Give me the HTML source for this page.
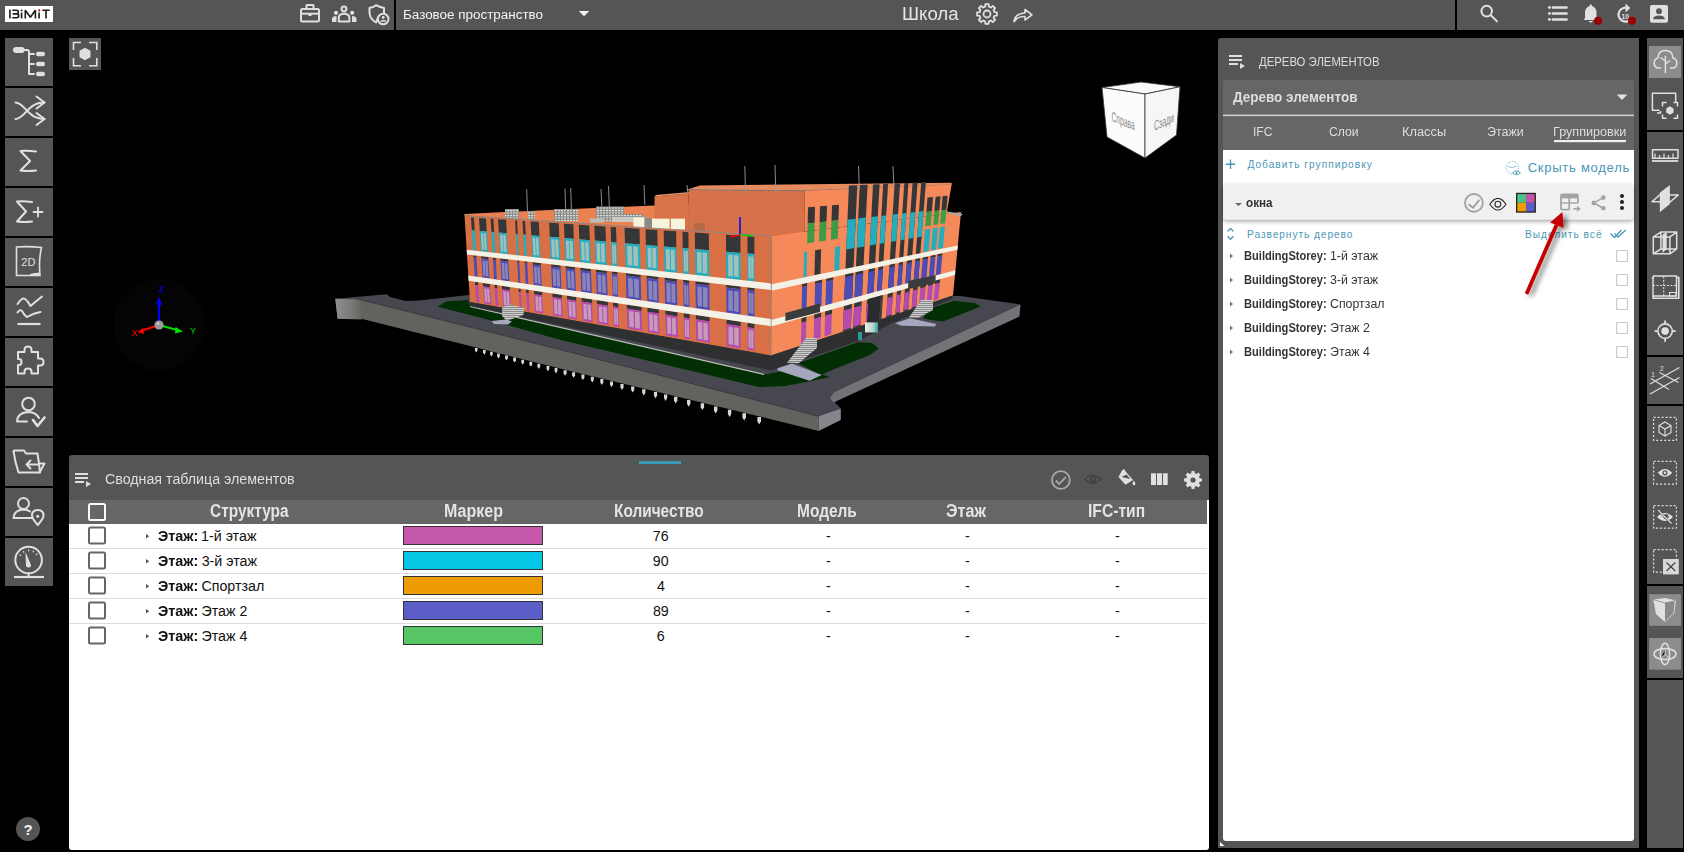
<!DOCTYPE html>
<html><head><meta charset="utf-8">
<style>
*{box-sizing:border-box;margin:0;padding:0}
html,body{width:1684px;height:852px;overflow:hidden;background:#000;font-family:"Liberation Sans",sans-serif}
.a{position:absolute}
.t{position:absolute;white-space:nowrap;transform-origin:0 0}
svg{position:absolute;left:0;top:0}
</style></head><body>
<div class="a" style="left:0;top:0;width:1684px;height:30px;background:#555"></div>
<div class="a" style="left:394px;top:0;width:2px;height:30px;background:#000"></div>
<div class="a" style="left:1455px;top:0;width:2px;height:30px;background:#000"></div>
<div class="a" style="left:69px;top:455px;width:1140px;height:395px;background:#555;border-radius:3px 3px 3px 3px"></div>
<div class="a" style="left:69px;top:500px;width:1138px;height:23.5px;background:#666"></div>
<div class="a" style="left:69px;top:523.5px;width:1140px;height:326.5px;background:#fff;border-radius:0 0 3px 3px"></div>
<div class="a" style="left:1207px;top:500px;width:2px;height:23.5px;background:#fff"></div>
<div class="a" style="left:1218px;top:38px;width:421px;height:810px;background:#555;border-radius:3px 0 0 0"></div>
<div class="a" style="left:1223px;top:80px;width:411px;height:70px;background:#666;border-radius:3px 3px 0 0"></div>
<div class="a" style="left:1223px;top:150px;width:411px;height:691px;background:#fff;border-radius:0 0 3px 3px"></div>
<svg width="1684" height="852" viewBox="0 0 1684 852">
<path d="M335.3 298.7 L387.0 294.2 L390.0 297.0 L405.7 301.0 L419.0 300.5 L468.9 295.1 L960.0 296.0 L1020.5 304.4 L834.2 391.9 L830.0 397.6 L840.8 408.4 L818.7 416.3 L560.0 349.6 L355.0 298.3 Z" fill="#47474f" />
<path d="M355.0 298.3 L560.0 349.6 L818.7 416.3 L818.7 430.9 L780.0 421.4 L560.0 368.5 L359.4 318.3 L337.6 318.7 L335.3 298.7 Z" fill="#62625e" />
<defs><linearGradient id="lg1" x1="0" x2="1"><stop offset="0" stop-color="#8e8e8c"/><stop offset="0.6" stop-color="#7a7a78"/><stop offset="1" stop-color="#62625e"/></linearGradient></defs>
<path d="M335.3 298.7 L362.0 300.0 L362.0 319.5 L337.6 318.7 Z" fill="url(#lg1)" />
<path d="M818.7 416.3 L840.8 408.4 L840.8 420.1 L818.7 430.9 Z" fill="#85858b" />
<path d="M830.0 397.6 L834.2 391.9 L1020.5 304.4 L1019.5 316.6 L834.2 402.3 L832.0 401.0 Z" fill="#737377" />
<path d="M355 298.3 L560 349.6 L818.7 416.3" stroke="#3a3a3e" stroke-width="0.8" fill="none"/>
<path d="M474.9 348.0 H477.5 V350.5 L476.2 352.5 L474.9 350.5 Z" fill="#d6d6d6"/>
<path d="M483.0 350.1 H485.6 V352.6 L484.3 354.7 L483.0 352.6 Z" fill="#d6d6d6"/>
<path d="M490.1 351.8 H492.7 V354.4 L491.4 356.5 L490.1 354.4 Z" fill="#d6d6d6"/>
<path d="M497.2 353.6 H499.8 V356.3 L498.5 358.4 L497.2 356.3 Z" fill="#d6d6d6"/>
<path d="M505.1 355.6 H507.9 V358.3 L506.5 360.4 L505.1 358.3 Z" fill="#d6d6d6"/>
<path d="M513.2 357.6 H516.0 V360.4 L514.6 362.6 L513.2 360.4 Z" fill="#d6d6d6"/>
<path d="M521.3 359.7 H524.1 V362.5 L522.7 364.7 L521.3 362.5 Z" fill="#d6d6d6"/>
<path d="M529.4 361.7 H532.2 V364.5 L530.8 366.8 L529.4 364.5 Z" fill="#d6d6d6"/>
<path d="M537.4 363.7 H540.2 V366.6 L538.8 368.9 L537.4 366.6 Z" fill="#d6d6d6"/>
<path d="M546.5 366.0 H549.3 V368.9 L547.9 371.2 L546.5 368.9 Z" fill="#d6d6d6"/>
<path d="M554.6 368.0 H557.4 V371.0 L556.0 373.4 L554.6 371.0 Z" fill="#d6d6d6"/>
<path d="M563.6 370.2 H566.6 V373.3 L565.1 375.7 L563.6 373.3 Z" fill="#d6d6d6"/>
<path d="M572.1 372.3 H575.1 V375.4 L573.6 377.8 L572.1 375.4 Z" fill="#d6d6d6"/>
<path d="M581.4 374.5 H584.4 V377.7 L582.9 380.1 L581.4 377.7 Z" fill="#d6d6d6"/>
<path d="M590.8 376.8 H593.8 V380.0 L592.3 382.5 L590.8 380.0 Z" fill="#d6d6d6"/>
<path d="M600.3 379.1 H603.3 V382.4 L601.8 384.9 L600.3 382.4 Z" fill="#d6d6d6"/>
<path d="M610.0 381.4 H613.0 V384.7 L611.5 387.3 L610.0 384.7 Z" fill="#d6d6d6"/>
<path d="M620.4 383.9 H623.6 V387.3 L622.0 390.0 L620.4 387.3 Z" fill="#d6d6d6"/>
<path d="M631.1 386.5 H634.3 V390.0 L632.7 392.6 L631.1 390.0 Z" fill="#d6d6d6"/>
<path d="M642.2 389.2 H645.4 V392.7 L643.8 395.4 L642.2 392.7 Z" fill="#d6d6d6"/>
<path d="M653.9 392.0 H657.1 V395.6 L655.5 398.4 L653.9 395.6 Z" fill="#d6d6d6"/>
<path d="M664.0 394.4 H667.2 V398.1 L665.6 400.9 L664.0 398.1 Z" fill="#d6d6d6"/>
<path d="M674.0 396.8 H677.4 V400.6 L675.7 403.4 L674.0 400.6 Z" fill="#d6d6d6"/>
<path d="M687.0 400.0 H690.4 V403.8 L688.7 406.7 L687.0 403.8 Z" fill="#d6d6d6"/>
<path d="M700.7 403.2 H704.1 V407.2 L702.4 410.1 L700.7 407.2 Z" fill="#d6d6d6"/>
<path d="M714.0 406.4 H717.4 V410.5 L715.7 413.5 L714.0 410.5 Z" fill="#d6d6d6"/>
<path d="M727.9 409.8 H731.3 V413.9 L729.6 417.0 L727.9 413.9 Z" fill="#d6d6d6"/>
<path d="M742.4 413.3 H746.0 V417.5 L744.2 420.6 L742.4 417.5 Z" fill="#d6d6d6"/>
<path d="M757.4 416.9 H761.0 V421.2 L759.2 424.4 L757.4 421.2 Z" fill="#d6d6d6"/>
<path d="M437.7 306.7 L446.0 301.5 L468.0 300.0 L470.0 306.0 L764.0 374.4 L800.0 368.0 L830.0 377.0 L808.8 381.6 L785.0 386.0 L760.0 387.2 L560.0 339.8 L480.0 317.4 Z" fill="#012e02" />
<path d="M798.0 363.2 L857.9 342.3 L872.0 343.0 L878.8 348.5 L870.0 355.0 L833.2 369.4 L821.0 375.0 Z" fill="#012e02" />
<path d="M923.2 318.2 L929.0 309.0 L953.9 300.8 L975.0 303.0 L980.5 306.6 L943.1 321.5 L930.7 320.0 Z" fill="#012e02" />
<path d="M470 306.5 L764 374.4" stroke="#bdbdbd" stroke-width="1.2"/>
<path d="M776.0 364.7 L792.4 363.7 L821.8 375.1 L809.5 380.8 L778.0 370.4 Z" fill="#a6a6bc" />
<path d="M894.9 323.2 L909.9 318.2 L936.5 324.0 L934.8 326.5 L901.6 325.7 Z" fill="#a6a6bc" />
<path d="M491.6 321.0 L506.0 319.5 L512.0 321.5 L508.0 324.5 L494.0 324.0 Z" fill="#a6a6bc" />
<path d="M464.5 215.6 L464.5 214.0 L560.0 209.5 L654.5 205.4 L688.7 204.5 L688.7 231.5 Z" fill="#e98150" />
<path d="M654.5 196.5 L688.7 193.5 L688.7 232.0 L654.5 229.0 Z" fill="#d9744a" />
<path d="M654.5 196.5 L688.7 193.5 L690.0 192.0 L656.0 195.0 Z" fill="#f09a70" />
<path d="M688.7 189.6 L804.4 190.8 L804.4 234.5 L771.5 236.0 L688.7 231.5 Z" fill="#d7714a" />
<path d="M686.5 189.7 L700.0 185.5 L951.7 182.8 L951.7 184.8 L804.4 190.8 Z" fill="#e68a60" />
<path d="M686.5 189.7 L804.4 190.8 L951.7 184.8" stroke="#777" stroke-width="0.8" fill="none"/>
<defs><pattern id="eqp" width="3" height="2.5" patternUnits="userSpaceOnUse"><rect width="3" height="2.5" fill="#8e8e8c"/><rect width="2" height="1" fill="#e6e6e2"/></pattern></defs>
<rect x="505" y="209" width="14" height="11" fill="url(#eqp)"/>
<rect x="528" y="211" width="7" height="9" fill="url(#eqp)"/>
<rect x="554" y="209" width="24" height="12" fill="url(#eqp)"/>
<rect x="596" y="206.5" width="28" height="15" fill="url(#eqp)"/>
<rect x="622" y="214" width="20" height="8" fill="url(#eqp)"/>
<rect x="640" y="216" width="6" height="8" fill="url(#eqp)"/>
<rect x="612" y="217" width="30" height="5" fill="#c8c8c4"/>
<rect x="590" y="218.5" width="14" height="4" fill="#bdbdb9"/>
<rect x="633.4" y="217.4" width="11.2" height="11.9" fill="#f6f4dc"/>
<rect x="652" y="218.6" width="17.6" height="10.5" fill="#f6f4dc"/>
<rect x="670.8" y="218.6" width="14.2" height="11" fill="#f6f4dc"/>
<rect x="644.6" y="218" width="7.4" height="11" fill="#8a8a88"/>
<rect x="694" y="223" width="11" height="9" fill="#b56a4a"/>
<path d="M464.5 215.6 L771.5 236.0 L771.0 355.5 L470.0 302.0 Z" fill="#d96f45" />
<path d="M471.0 217.4 L474.0 217.6 L474.8 230.4 L471.8 230.2 Z" fill="#353638" />
<path d="M471.8 230.2 L474.8 230.4 L476.0 250.7 L473.0 250.4 Z" fill="#22aebf" />
<path d="M473.3 255.2 L476.3 255.6 L476.5 257.7 L473.5 257.4 Z" fill="#353638" />
<path d="M473.5 257.4 L476.5 257.7 L477.6 276.9 L474.7 276.5 Z" fill="#4b4cb6" />
<path d="M475.0 281.7 L478.0 282.1 L478.2 285.6 L475.2 285.1 Z" fill="#353638" />
<path d="M475.2 285.1 L478.2 285.6 L479.2 302.4 L476.2 301.8 Z" fill="#b44cb0" />
<path d="M479.0 217.9 L486.0 218.4 L486.8 231.5 L479.8 230.9 Z" fill="#353638" />
<path d="M479.8 230.9 L486.8 231.5 L488.0 252.1 L481.0 251.3 Z" fill="#22aebf" />
<path d="M480.9 233.0 L483.1 233.2 L484.1 249.6 L481.9 249.4 Z" fill="#b4c4bc" opacity="0.85"/>
<path d="M483.7 233.2 L485.9 233.4 L486.9 249.9 L484.7 249.7 Z" fill="#b4c4bc" opacity="0.85"/>
<path d="M481.3 256.1 L488.3 256.9 L488.4 259.2 L481.4 258.3 Z" fill="#353638" />
<path d="M481.4 258.3 L488.4 259.2 L489.6 278.6 L482.6 277.6 Z" fill="#4b4cb6" />
<path d="M482.5 260.4 L484.8 260.7 L485.7 276.2 L483.5 275.8 Z" fill="#9890b8" opacity="0.85"/>
<path d="M485.3 260.7 L487.6 261.0 L488.5 276.6 L486.2 276.2 Z" fill="#9890b8" opacity="0.85"/>
<path d="M482.9 282.9 L489.9 283.9 L490.1 287.4 L483.1 286.3 Z" fill="#353638" />
<path d="M483.1 286.3 L490.1 287.4 L491.1 304.5 L484.2 303.2 Z" fill="#b44cb0" />
<path d="M484.2 288.2 L486.4 288.5 L487.2 302.1 L485.0 301.7 Z" fill="#c8a8bc" opacity="0.85"/>
<path d="M487.0 288.6 L489.2 289.0 L490.0 302.6 L487.8 302.2 Z" fill="#c8a8bc" opacity="0.85"/>
<path d="M490.6 218.7 L493.4 218.9 L494.2 232.1 L491.4 231.8 Z" fill="#353638" />
<path d="M491.4 231.8 L494.2 232.1 L495.4 252.9 L492.6 252.6 Z" fill="#22aebf" />
<path d="M492.9 257.5 L495.7 257.8 L495.8 260.1 L493.0 259.7 Z" fill="#353638" />
<path d="M493.0 259.7 L495.8 260.1 L496.9 279.7 L494.1 279.3 Z" fill="#4b4cb6" />
<path d="M494.4 284.6 L497.2 285.0 L497.4 288.6 L494.7 288.1 Z" fill="#353638" />
<path d="M494.7 288.1 L497.4 288.6 L498.4 305.7 L495.6 305.3 Z" fill="#b44cb0" />
<path d="M498.0 219.2 L506.1 219.7 L506.8 233.2 L498.8 232.5 Z" fill="#353638" />
<path d="M498.8 232.5 L506.8 233.2 L507.9 254.3 L500.0 253.4 Z" fill="#22aebf" />
<path d="M500.0 234.7 L502.6 234.9 L503.5 251.7 L501.0 251.4 Z" fill="#b4c4bc" opacity="0.85"/>
<path d="M503.2 235.0 L505.8 235.2 L506.7 252.0 L504.1 251.8 Z" fill="#b4c4bc" opacity="0.85"/>
<path d="M500.3 258.3 L508.2 259.3 L508.3 261.6 L500.4 260.6 Z" fill="#353638" />
<path d="M500.4 260.6 L508.3 261.6 L509.4 281.5 L501.5 280.3 Z" fill="#4b4cb6" />
<path d="M501.6 262.7 L504.1 263.0 L505.0 278.9 L502.5 278.5 Z" fill="#9890b8" opacity="0.85"/>
<path d="M504.8 263.1 L507.3 263.4 L508.2 279.3 L505.7 279.0 Z" fill="#9890b8" opacity="0.85"/>
<path d="M501.8 285.7 L509.7 286.9 L509.9 290.5 L502.0 289.3 Z" fill="#353638" />
<path d="M502.0 289.3 L509.9 290.5 L510.9 307.9 L503.0 306.5 Z" fill="#b44cb0" />
<path d="M503.2 291.2 L505.7 291.6 L506.5 305.5 L504.0 305.0 Z" fill="#c8a8bc" opacity="0.85"/>
<path d="M506.4 291.7 L508.9 292.1 L509.7 306.0 L507.1 305.6 Z" fill="#c8a8bc" opacity="0.85"/>
<path d="M515.1 220.4 L517.1 220.5 L517.8 234.1 L515.8 233.9 Z" fill="#353638" />
<path d="M515.8 233.9 L517.8 234.1 L518.9 255.5 L516.9 255.2 Z" fill="#22aebf" />
<path d="M517.2 260.3 L519.2 260.6 L519.3 262.9 L517.3 262.6 Z" fill="#353638" />
<path d="M517.3 262.6 L519.3 262.9 L520.4 283.1 L518.4 282.8 Z" fill="#4b4cb6" />
<path d="M518.7 288.2 L520.6 288.5 L520.8 292.2 L518.8 291.9 Z" fill="#353638" />
<path d="M518.8 291.9 L520.8 292.2 L521.8 309.9 L519.8 309.5 Z" fill="#b44cb0" />
<path d="M522.5 220.9 L525.1 221.0 L525.8 234.8 L523.2 234.5 Z" fill="#353638" />
<path d="M523.2 234.5 L525.8 234.8 L526.9 256.4 L524.3 256.1 Z" fill="#22aebf" />
<path d="M524.6 261.2 L527.2 261.5 L527.3 263.8 L524.7 263.5 Z" fill="#353638" />
<path d="M524.7 263.5 L527.3 263.8 L528.3 284.2 L525.7 283.8 Z" fill="#4b4cb6" />
<path d="M526.0 289.3 L528.6 289.7 L528.8 293.4 L526.2 293.0 Z" fill="#353638" />
<path d="M526.2 293.0 L528.8 293.4 L529.7 311.2 L527.1 310.8 Z" fill="#b44cb0" />
<path d="M530.6 221.4 L538.8 222.0 L539.4 235.9 L531.3 235.2 Z" fill="#353638" />
<path d="M531.3 235.2 L539.4 235.9 L540.5 257.9 L532.4 257.0 Z" fill="#22aebf" />
<path d="M532.5 237.5 L535.1 237.7 L536.0 255.2 L533.4 254.9 Z" fill="#b4c4bc" opacity="0.85"/>
<path d="M535.8 237.8 L538.4 238.0 L539.2 255.5 L536.6 255.3 Z" fill="#b4c4bc" opacity="0.85"/>
<path d="M532.6 262.1 L540.7 263.1 L540.8 265.4 L532.7 264.5 Z" fill="#353638" />
<path d="M532.7 264.5 L540.8 265.4 L541.8 286.1 L533.8 285.0 Z" fill="#4b4cb6" />
<path d="M534.0 266.7 L536.5 267.0 L537.3 283.5 L534.8 283.1 Z" fill="#9890b8" opacity="0.85"/>
<path d="M537.2 267.1 L539.8 267.4 L540.6 283.9 L538.0 283.6 Z" fill="#9890b8" opacity="0.85"/>
<path d="M534.0 290.5 L542.1 291.8 L542.2 295.5 L534.2 294.3 Z" fill="#353638" />
<path d="M534.2 294.3 L542.2 295.5 L543.1 313.6 L535.1 312.2 Z" fill="#b44cb0" />
<path d="M535.4 296.2 L538.0 296.6 L538.7 311.1 L536.1 310.6 Z" fill="#c8a8bc" opacity="0.85"/>
<path d="M538.6 296.7 L541.2 297.1 L541.9 311.6 L539.3 311.2 Z" fill="#c8a8bc" opacity="0.85"/>
<path d="M549.2 222.7 L558.7 223.3 L559.3 237.6 L549.8 236.8 Z" fill="#353638" />
<path d="M549.8 236.8 L559.3 237.6 L560.3 260.0 L550.8 259.0 Z" fill="#22aebf" />
<path d="M551.2 239.1 L554.3 239.4 L555.1 257.3 L552.0 256.9 Z" fill="#b4c4bc" opacity="0.85"/>
<path d="M555.0 239.5 L558.1 239.7 L558.9 257.7 L555.8 257.3 Z" fill="#b4c4bc" opacity="0.85"/>
<path d="M551.1 264.3 L560.5 265.4 L560.6 267.8 L551.2 266.7 Z" fill="#353638" />
<path d="M551.2 266.7 L560.6 267.8 L561.5 289.0 L552.1 287.6 Z" fill="#4b4cb6" />
<path d="M552.6 268.9 L555.6 269.3 L556.3 286.1 L553.3 285.7 Z" fill="#9890b8" opacity="0.85"/>
<path d="M556.3 269.4 L559.4 269.8 L560.1 286.7 L557.1 286.3 Z" fill="#9890b8" opacity="0.85"/>
<path d="M552.4 293.3 L561.8 294.7 L561.9 298.5 L552.5 297.1 Z" fill="#353638" />
<path d="M552.5 297.1 L561.9 298.5 L562.7 317.1 L553.4 315.4 Z" fill="#b44cb0" />
<path d="M553.9 299.1 L556.9 299.6 L557.6 314.3 L554.6 313.8 Z" fill="#c8a8bc" opacity="0.85"/>
<path d="M557.7 299.7 L560.7 300.2 L561.3 315.0 L558.3 314.5 Z" fill="#c8a8bc" opacity="0.85"/>
<path d="M563.9 223.7 L573.3 224.3 L573.8 238.8 L564.5 238.0 Z" fill="#353638" />
<path d="M564.5 238.0 L573.8 238.8 L574.7 261.6 L565.5 260.6 Z" fill="#22aebf" />
<path d="M565.9 240.4 L568.9 240.7 L569.6 258.8 L566.7 258.5 Z" fill="#b4c4bc" opacity="0.85"/>
<path d="M569.6 240.7 L572.6 241.0 L573.3 259.2 L570.4 258.9 Z" fill="#b4c4bc" opacity="0.85"/>
<path d="M565.7 266.0 L575.0 267.1 L575.1 269.5 L565.8 268.4 Z" fill="#353638" />
<path d="M565.8 268.4 L575.1 269.5 L575.9 291.1 L566.7 289.7 Z" fill="#4b4cb6" />
<path d="M567.2 270.7 L570.1 271.1 L570.8 288.2 L567.9 287.8 Z" fill="#9890b8" opacity="0.85"/>
<path d="M570.9 271.2 L573.8 271.5 L574.5 288.7 L571.6 288.3 Z" fill="#9890b8" opacity="0.85"/>
<path d="M566.9 295.5 L576.1 296.9 L576.3 300.8 L567.1 299.3 Z" fill="#353638" />
<path d="M567.1 299.3 L576.3 300.8 L577.0 319.6 L567.9 318.0 Z" fill="#b44cb0" />
<path d="M568.5 301.4 L571.4 301.9 L572.0 316.9 L569.1 316.3 Z" fill="#c8a8bc" opacity="0.85"/>
<path d="M572.1 302.0 L575.1 302.5 L575.7 317.5 L572.7 317.0 Z" fill="#c8a8bc" opacity="0.85"/>
<path d="M578.8 224.7 L589.3 225.4 L589.9 240.2 L579.3 239.3 Z" fill="#353638" />
<path d="M579.3 239.3 L589.9 240.2 L590.7 263.4 L580.2 262.2 Z" fill="#22aebf" />
<path d="M580.9 241.7 L584.2 242.0 L584.9 260.5 L581.6 260.1 Z" fill="#b4c4bc" opacity="0.85"/>
<path d="M585.1 242.1 L588.5 242.4 L589.1 260.9 L585.8 260.6 Z" fill="#b4c4bc" opacity="0.85"/>
<path d="M580.4 267.7 L590.9 268.9 L591.0 271.4 L580.5 270.2 Z" fill="#353638" />
<path d="M580.5 270.2 L591.0 271.4 L591.8 293.3 L581.4 291.8 Z" fill="#4b4cb6" />
<path d="M582.1 272.5 L585.4 272.9 L586.0 290.4 L582.7 289.9 Z" fill="#9890b8" opacity="0.85"/>
<path d="M586.2 273.0 L589.6 273.4 L590.2 290.9 L586.9 290.5 Z" fill="#9890b8" opacity="0.85"/>
<path d="M581.6 297.7 L592.0 299.3 L592.1 303.2 L581.7 301.6 Z" fill="#353638" />
<path d="M581.7 301.6 L592.1 303.2 L592.8 322.4 L582.5 320.6 Z" fill="#b44cb0" />
<path d="M583.3 303.7 L586.6 304.3 L587.1 319.5 L583.8 318.9 Z" fill="#c8a8bc" opacity="0.85"/>
<path d="M587.4 304.4 L590.7 304.9 L591.3 320.2 L588.0 319.6 Z" fill="#c8a8bc" opacity="0.85"/>
<path d="M594.3 225.8 L605.4 226.5 L605.9 241.5 L594.9 240.6 Z" fill="#353638" />
<path d="M594.9 240.6 L605.9 241.5 L606.6 265.2 L595.7 264.0 Z" fill="#22aebf" />
<path d="M596.5 243.1 L600.0 243.4 L600.6 262.2 L597.1 261.8 Z" fill="#b4c4bc" opacity="0.85"/>
<path d="M600.8 243.5 L604.4 243.8 L605.0 262.6 L601.5 262.3 Z" fill="#b4c4bc" opacity="0.85"/>
<path d="M595.9 269.5 L606.8 270.8 L606.9 273.3 L596.0 272.0 Z" fill="#353638" />
<path d="M596.0 272.0 L606.9 273.3 L607.6 295.6 L596.7 294.0 Z" fill="#4b4cb6" />
<path d="M597.6 274.4 L601.0 274.8 L601.6 292.6 L598.2 292.1 Z" fill="#9890b8" opacity="0.85"/>
<path d="M601.9 274.9 L605.4 275.4 L606.0 293.2 L602.5 292.7 Z" fill="#9890b8" opacity="0.85"/>
<path d="M596.9 300.0 L607.8 301.7 L608.0 305.7 L597.1 304.0 Z" fill="#353638" />
<path d="M597.1 304.0 L608.0 305.7 L608.6 325.2 L597.8 323.2 Z" fill="#b44cb0" />
<path d="M598.7 306.2 L602.1 306.7 L602.6 322.2 L599.2 321.6 Z" fill="#c8a8bc" opacity="0.85"/>
<path d="M603.0 306.8 L606.5 307.4 L607.0 322.9 L603.5 322.3 Z" fill="#c8a8bc" opacity="0.85"/>
<path d="M610.6 226.9 L616.0 227.2 L616.5 242.4 L611.1 242.0 Z" fill="#353638" />
<path d="M611.1 242.0 L616.5 242.4 L617.2 266.3 L611.8 265.7 Z" fill="#22aebf" />
<path d="M611.9 244.4 L613.6 244.6 L614.2 263.6 L612.5 263.5 Z" fill="#b4c4bc" opacity="0.85"/>
<path d="M614.1 244.6 L615.8 244.8 L616.4 263.9 L614.6 263.7 Z" fill="#b4c4bc" opacity="0.85"/>
<path d="M612.0 271.4 L617.4 272.0 L617.4 274.6 L612.1 273.9 Z" fill="#353638" />
<path d="M612.1 273.9 L617.4 274.6 L618.1 297.1 L612.8 296.4 Z" fill="#4b4cb6" />
<path d="M612.9 276.3 L614.6 276.5 L615.2 294.5 L613.5 294.2 Z" fill="#9890b8" opacity="0.85"/>
<path d="M615.0 276.5 L616.8 276.8 L617.3 294.8 L615.6 294.5 Z" fill="#9890b8" opacity="0.85"/>
<path d="M613.0 302.4 L618.3 303.2 L618.4 307.3 L613.1 306.5 Z" fill="#353638" />
<path d="M613.1 306.5 L618.4 307.3 L619.0 327.0 L613.7 326.1 Z" fill="#b44cb0" />
<path d="M613.9 308.5 L615.6 308.8 L616.1 324.5 L614.4 324.2 Z" fill="#c8a8bc" opacity="0.85"/>
<path d="M616.0 308.9 L617.7 309.2 L618.2 324.9 L616.5 324.6 Z" fill="#c8a8bc" opacity="0.85"/>
<path d="M624.5 227.8 L639.5 228.8 L639.9 244.4 L625.0 243.2 Z" fill="#353638" />
<path d="M625.0 243.2 L639.9 244.4 L640.5 268.9 L625.7 267.3 Z" fill="#22aebf" />
<path d="M627.1 245.8 L631.8 246.2 L632.4 265.6 L627.6 265.1 Z" fill="#b4c4bc" opacity="0.85"/>
<path d="M633.0 246.3 L637.8 246.7 L638.3 266.2 L633.6 265.7 Z" fill="#b4c4bc" opacity="0.85"/>
<path d="M625.8 273.0 L640.7 274.7 L640.7 277.4 L625.9 275.6 Z" fill="#353638" />
<path d="M625.9 275.6 L640.7 277.4 L641.3 300.5 L626.5 298.3 Z" fill="#4b4cb6" />
<path d="M628.0 278.1 L632.7 278.7 L633.2 297.0 L628.5 296.4 Z" fill="#9890b8" opacity="0.85"/>
<path d="M633.9 278.8 L638.7 279.4 L639.1 297.9 L634.4 297.2 Z" fill="#9890b8" opacity="0.85"/>
<path d="M626.7 304.5 L641.5 306.7 L641.6 310.9 L626.8 308.6 Z" fill="#353638" />
<path d="M626.8 308.6 L641.6 310.9 L642.1 331.0 L627.4 328.5 Z" fill="#b44cb0" />
<path d="M628.9 310.9 L633.6 311.6 L634.0 327.6 L629.4 326.8 Z" fill="#c8a8bc" opacity="0.85"/>
<path d="M634.8 311.8 L639.5 312.6 L639.9 328.7 L635.2 327.9 Z" fill="#c8a8bc" opacity="0.85"/>
<path d="M645.5 229.3 L657.3 230.1 L657.6 245.9 L645.9 244.9 Z" fill="#353638" />
<path d="M645.9 244.9 L657.6 245.9 L658.1 270.9 L646.5 269.6 Z" fill="#22aebf" />
<path d="M647.6 247.5 L651.3 247.9 L651.8 267.7 L648.0 267.3 Z" fill="#b4c4bc" opacity="0.85"/>
<path d="M652.2 248.0 L656.0 248.3 L656.4 268.2 L652.7 267.8 Z" fill="#b4c4bc" opacity="0.85"/>
<path d="M646.6 275.4 L658.3 276.8 L658.3 279.5 L646.7 278.1 Z" fill="#353638" />
<path d="M646.7 278.1 L658.3 279.5 L658.8 303.0 L647.2 301.3 Z" fill="#4b4cb6" />
<path d="M648.4 280.6 L652.1 281.1 L652.5 299.7 L648.8 299.2 Z" fill="#9890b8" opacity="0.85"/>
<path d="M653.0 281.2 L656.7 281.6 L657.1 300.4 L653.4 299.9 Z" fill="#9890b8" opacity="0.85"/>
<path d="M647.4 307.6 L658.9 309.3 L659.0 313.6 L647.5 311.8 Z" fill="#353638" />
<path d="M647.5 311.8 L659.0 313.6 L659.5 334.1 L648.0 332.1 Z" fill="#b44cb0" />
<path d="M649.1 314.1 L652.8 314.7 L653.2 331.0 L649.5 330.3 Z" fill="#c8a8bc" opacity="0.85"/>
<path d="M653.7 314.8 L657.4 315.4 L657.8 331.8 L654.1 331.1 Z" fill="#c8a8bc" opacity="0.85"/>
<path d="M663.7 230.5 L676.1 231.3 L676.3 247.5 L664.0 246.5 Z" fill="#353638" />
<path d="M664.0 246.5 L676.3 247.5 L676.8 272.9 L664.5 271.6 Z" fill="#22aebf" />
<path d="M665.8 249.1 L669.7 249.5 L670.1 269.7 L666.2 269.3 Z" fill="#b4c4bc" opacity="0.85"/>
<path d="M670.7 249.6 L674.6 249.9 L675.0 270.2 L671.0 269.8 Z" fill="#b4c4bc" opacity="0.85"/>
<path d="M664.6 277.5 L676.9 279.0 L676.9 281.7 L664.7 280.2 Z" fill="#353638" />
<path d="M664.7 280.2 L676.9 281.7 L677.3 305.6 L665.1 303.9 Z" fill="#4b4cb6" />
<path d="M666.4 282.8 L670.3 283.3 L670.7 302.3 L666.8 301.8 Z" fill="#9890b8" opacity="0.85"/>
<path d="M671.3 283.4 L675.2 283.9 L675.5 303.0 L671.6 302.5 Z" fill="#9890b8" opacity="0.85"/>
<path d="M665.3 310.3 L677.4 312.1 L677.5 316.4 L665.4 314.6 Z" fill="#353638" />
<path d="M665.4 314.6 L677.5 316.4 L677.9 337.3 L665.8 335.2 Z" fill="#b44cb0" />
<path d="M667.1 316.9 L670.9 317.5 L671.2 334.1 L667.4 333.5 Z" fill="#c8a8bc" opacity="0.85"/>
<path d="M671.9 317.7 L675.8 318.3 L676.1 335.0 L672.2 334.3 Z" fill="#c8a8bc" opacity="0.85"/>
<path d="M682.5 231.8 L688.4 232.2 L688.6 248.5 L682.7 248.0 Z" fill="#353638" />
<path d="M682.7 248.0 L688.6 248.5 L689.0 274.3 L683.1 273.6 Z" fill="#22aebf" />
<path d="M683.6 250.7 L685.5 250.9 L685.8 271.4 L683.9 271.2 Z" fill="#b4c4bc" opacity="0.85"/>
<path d="M685.9 250.9 L687.8 251.1 L688.1 271.6 L686.3 271.4 Z" fill="#b4c4bc" opacity="0.85"/>
<path d="M683.2 279.7 L689.1 280.4 L689.1 283.2 L683.3 282.5 Z" fill="#353638" />
<path d="M683.3 282.5 L689.1 283.2 L689.5 307.4 L683.6 306.5 Z" fill="#4b4cb6" />
<path d="M684.1 285.0 L686.0 285.2 L686.3 304.5 L684.4 304.3 Z" fill="#9890b8" opacity="0.85"/>
<path d="M686.5 285.3 L688.3 285.5 L688.6 304.9 L686.7 304.6 Z" fill="#9890b8" opacity="0.85"/>
<path d="M683.7 313.1 L689.6 314.0 L689.6 318.3 L683.8 317.4 Z" fill="#353638" />
<path d="M683.8 317.4 L689.6 318.3 L689.9 339.5 L684.1 338.5 Z" fill="#b44cb0" />
<path d="M684.7 319.7 L686.5 319.9 L686.8 336.8 L684.9 336.5 Z" fill="#c8a8bc" opacity="0.85"/>
<path d="M687.0 320.0 L688.8 320.3 L689.1 337.2 L687.2 336.9 Z" fill="#c8a8bc" opacity="0.85"/>
<path d="M694.8 232.6 L708.8 233.6 L709.0 250.3 L695.0 249.1 Z" fill="#353638" />
<path d="M695.0 249.1 L709.0 250.3 L709.2 276.5 L695.4 275.0 Z" fill="#22aebf" />
<path d="M697.0 251.9 L701.4 252.2 L701.7 273.1 L697.3 272.6 Z" fill="#b4c4bc" opacity="0.85"/>
<path d="M702.5 252.3 L707.0 252.7 L707.2 273.7 L702.8 273.2 Z" fill="#b4c4bc" opacity="0.85"/>
<path d="M695.5 281.1 L709.3 282.7 L709.3 285.6 L695.5 283.9 Z" fill="#353638" />
<path d="M695.5 283.9 L709.3 285.6 L709.5 310.3 L695.8 308.3 Z" fill="#4b4cb6" />
<path d="M697.4 286.6 L701.8 287.1 L702.0 306.8 L697.7 306.1 Z" fill="#9890b8" opacity="0.85"/>
<path d="M702.9 287.3 L707.4 287.8 L707.6 307.5 L703.1 306.9 Z" fill="#9890b8" opacity="0.85"/>
<path d="M695.9 314.9 L709.6 317.0 L709.6 321.4 L695.9 319.3 Z" fill="#353638" />
<path d="M695.9 319.3 L709.6 321.4 L709.9 343.0 L696.2 340.6 Z" fill="#b44cb0" />
<path d="M697.9 321.7 L702.2 322.4 L702.4 339.5 L698.1 338.8 Z" fill="#c8a8bc" opacity="0.85"/>
<path d="M703.3 322.6 L707.7 323.3 L707.9 340.5 L703.5 339.7 Z" fill="#c8a8bc" opacity="0.85"/>
<path d="M726.0 234.7 L740.4 235.7 L740.5 252.9 L726.1 251.7 Z" fill="#353638" />
<path d="M726.1 251.7 L740.5 252.9 L740.6 280.0 L726.2 278.4 Z" fill="#22aebf" />
<path d="M728.1 254.6 L732.7 255.0 L732.8 276.4 L728.2 275.9 Z" fill="#b4c4bc" opacity="0.85"/>
<path d="M733.8 255.1 L738.5 255.5 L738.5 277.1 L733.9 276.6 Z" fill="#b4c4bc" opacity="0.85"/>
<path d="M726.3 284.7 L740.6 286.4 L740.6 289.3 L726.3 287.6 Z" fill="#353638" />
<path d="M726.3 287.6 L740.6 289.3 L740.7 314.8 L726.4 312.7 Z" fill="#4b4cb6" />
<path d="M728.3 290.4 L732.8 290.9 L732.9 311.1 L728.4 310.5 Z" fill="#9890b8" opacity="0.85"/>
<path d="M734.0 291.1 L738.6 291.6 L738.6 311.9 L734.1 311.3 Z" fill="#9890b8" opacity="0.85"/>
<path d="M726.5 319.5 L740.7 321.6 L740.7 326.2 L726.5 324.0 Z" fill="#353638" />
<path d="M726.5 324.0 L740.7 326.2 L740.7 348.4 L726.6 345.9 Z" fill="#b44cb0" />
<path d="M728.5 326.5 L733.0 327.2 L733.1 344.9 L728.6 344.1 Z" fill="#c8a8bc" opacity="0.85"/>
<path d="M734.1 327.4 L738.7 328.1 L738.7 345.9 L734.2 345.1 Z" fill="#c8a8bc" opacity="0.85"/>
<path d="M747.5 236.2 L754.4 236.7 L754.4 254.1 L747.5 253.5 Z" fill="#353638" />
<path d="M747.5 253.5 L754.4 254.1 L754.4 281.5 L747.5 280.7 Z" fill="#22aebf" />
<path d="M748.5 256.4 L750.7 256.5 L750.7 278.4 L748.5 278.1 Z" fill="#b4c4bc" opacity="0.85"/>
<path d="M751.2 256.6 L753.4 256.8 L753.4 278.7 L751.2 278.4 Z" fill="#b4c4bc" opacity="0.85"/>
<path d="M747.5 287.2 L754.4 288.0 L754.4 290.9 L747.5 290.1 Z" fill="#353638" />
<path d="M747.5 290.1 L754.4 290.9 L754.4 316.7 L747.6 315.7 Z" fill="#4b4cb6" />
<path d="M748.5 292.8 L750.7 293.1 L750.7 313.6 L748.5 313.3 Z" fill="#9890b8" opacity="0.85"/>
<path d="M751.2 293.2 L753.4 293.4 L753.4 314.0 L751.2 313.7 Z" fill="#9890b8" opacity="0.85"/>
<path d="M747.6 322.7 L754.4 323.7 L754.4 328.3 L747.6 327.3 Z" fill="#353638" />
<path d="M747.6 327.3 L754.4 328.3 L754.4 350.8 L747.6 349.6 Z" fill="#b44cb0" />
<path d="M748.5 329.7 L750.7 330.0 L750.7 347.9 L748.5 347.6 Z" fill="#c8a8bc" opacity="0.85"/>
<path d="M751.2 330.1 L753.4 330.5 L753.4 348.4 L751.2 348.0 Z" fill="#c8a8bc" opacity="0.85"/>
<path d="M466.7 249.7 L771.3 283.4 L771.3 290.0 L467.0 254.5 Z" fill="#f4f2e6" />
<path d="M468.3 275.6 L771.2 319.1 L771.1 326.2 L468.6 280.7 Z" fill="#f4f2e6" />
<path d="M470.0 302.0 L771.0 355.5 L771.0 370.5 L470.0 306.0 Z" fill="#2e2f31" />
<path d="M464.5 215.6 L771.5 236" stroke="#8a8a8a" stroke-width="0.9"/>
<path d="M771.5 236.0 L961.0 212.0 L953.0 295.5 L771.0 355.5 Z" fill="#f58959" />
<path d="M804.4 190.8 L951.6 184.6 L947.0 211.6 L951.7 213.2 L804.4 231.8 Z" fill="#f58959" />
<path d="M947.0 211.6 L962.8 214.0 L961.0 216.0 L948.0 213.5 Z" fill="#a8a8a8" />
<path d="M848.9 185.6 L857.3 185.2 L850.8 329.2 L842.9 331.8 Z" fill="#353638" />
<path d="M847.5 219.7 L855.8 218.8 L854.5 248.1 L846.3 249.5 Z" fill="#22aebf" />
<path d="M845.1 277.3 L853.2 275.5 L852.2 298.1 L844.2 300.3 Z" fill="#4b4cb6" />
<path d="M843.7 310.6 L851.8 308.3 L850.9 327.7 L842.9 330.3 Z" fill="#b44cb0" />
<path d="M859.7 185.1 L867.6 184.7 L860.5 326.0 L853.1 328.4 Z" fill="#353638" />
<path d="M858.2 218.5 L865.9 217.6 L864.5 246.4 L856.9 247.7 Z" fill="#22aebf" />
<path d="M855.6 275.0 L863.1 273.3 L862.0 295.5 L854.6 297.5 Z" fill="#4b4cb6" />
<path d="M854.1 307.6 L861.5 305.4 L860.6 324.5 L853.2 327.0 Z" fill="#b44cb0" />
<path d="M873.0 184.5 L879.6 184.2 L871.9 322.2 L865.7 324.3 Z" fill="#353638" />
<path d="M871.3 217.0 L877.9 216.3 L876.3 244.3 L869.8 245.4 Z" fill="#22aebf" />
<path d="M868.4 272.1 L874.8 270.6 L873.6 292.4 L867.3 294.1 Z" fill="#4b4cb6" />
<path d="M866.8 303.9 L873.1 302.1 L872.0 320.8 L865.8 322.8 Z" fill="#b44cb0" />
<path d="M883.2 184.0 L888.1 183.8 L879.9 319.6 L875.3 321.1 Z" fill="#353638" />
<path d="M881.4 215.9 L886.2 215.3 L884.5 242.9 L879.8 243.7 Z" fill="#22aebf" />
<path d="M878.3 269.9 L883.0 268.8 L881.7 290.2 L877.0 291.5 Z" fill="#4b4cb6" />
<path d="M876.5 301.1 L881.1 299.8 L880.0 318.2 L875.4 319.7 Z" fill="#b44cb0" />
<path d="M894.6 183.5 L900.1 183.2 L891.4 315.8 L886.2 317.5 Z" fill="#353638" />
<path d="M892.7 214.6 L898.1 214.0 L896.3 240.9 L891.0 241.8 Z" fill="#22aebf" />
<path d="M889.4 267.4 L894.7 266.2 L893.3 287.1 L888.0 288.5 Z" fill="#4b4cb6" />
<path d="M887.4 297.9 L892.7 296.4 L891.5 314.4 L886.3 316.1 Z" fill="#b44cb0" />
<path d="M904.3 183.0 L908.5 182.8 L899.5 313.2 L895.4 314.5 Z" fill="#353638" />
<path d="M902.2 213.5 L906.4 213.0 L904.6 239.5 L900.4 240.2 Z" fill="#22aebf" />
<path d="M898.7 265.3 L902.8 264.3 L901.4 284.9 L897.3 286.0 Z" fill="#4b4cb6" />
<path d="M896.7 295.3 L900.8 294.1 L899.6 311.8 L895.5 313.1 Z" fill="#b44cb0" />
<path d="M912.6 182.6 L917.6 182.4 L908.2 310.3 L903.3 311.9 Z" fill="#353638" />
<path d="M910.4 212.6 L915.4 212.0 L913.5 238.0 L908.5 238.8 Z" fill="#22aebf" />
<path d="M906.8 263.4 L911.7 262.3 L910.2 282.5 L905.3 283.8 Z" fill="#4b4cb6" />
<path d="M904.7 293.0 L909.6 291.6 L908.3 309.0 L903.4 310.5 Z" fill="#b44cb0" />
<path d="M921.2 182.2 L925.9 182.0 L916.1 307.7 L911.6 309.2 Z" fill="#353638" />
<path d="M918.9 211.6 L923.6 211.1 L921.7 236.6 L917.0 237.4 Z" fill="#22aebf" />
<path d="M915.2 261.6 L919.8 260.5 L918.3 280.4 L913.7 281.6 Z" fill="#4b4cb6" />
<path d="M913.0 290.6 L917.6 289.2 L916.2 306.3 L911.7 307.8 Z" fill="#b44cb0" />
<path d="M808.0 207.3 L815.0 206.7 L814.6 222.8 L807.6 223.5 Z" fill="#353638" />
<path d="M807.6 223.5 L814.6 222.8 L814.1 242.3 L807.2 243.3 Z" fill="#3f9a45" />
<path d="M820.0 206.3 L827.0 205.7 L826.5 221.4 L819.6 222.2 Z" fill="#353638" />
<path d="M819.6 222.2 L826.5 221.4 L825.9 240.5 L819.0 241.6 Z" fill="#3f9a45" />
<path d="M832.0 205.3 L839.0 204.7 L838.4 220.1 L831.5 220.9 Z" fill="#353638" />
<path d="M831.5 220.9 L838.4 220.1 L837.8 238.8 L830.9 239.8 Z" fill="#3f9a45" />
<path d="M802.1 283.9 L807.1 282.8 L807.1 285.9 L802.1 287.0 Z" fill="#353638" />
<path d="M802.1 287.0 L807.1 285.9 L806.5 310.4 L801.6 311.8 Z" fill="#4b4cb6" />
<path d="M801.5 317.9 L806.4 316.5 L806.3 321.4 L801.4 322.8 Z" fill="#353638" />
<path d="M801.4 322.8 L806.3 321.4 L805.8 342.4 L800.9 344.0 Z" fill="#b44cb0" />
<path d="M815.2 281.1 L822.2 279.5 L822.1 282.5 L815.1 284.1 Z" fill="#353638" />
<path d="M815.1 284.1 L822.1 282.5 L821.4 306.4 L814.5 308.3 Z" fill="#4b4cb6" />
<path d="M814.3 314.3 L821.2 312.3 L821.1 317.1 L814.2 319.1 Z" fill="#353638" />
<path d="M814.2 319.1 L821.1 317.1 L820.5 337.6 L813.6 339.9 Z" fill="#b44cb0" />
<path d="M826.2 278.7 L833.2 277.1 L833.1 280.0 L826.1 281.6 Z" fill="#353638" />
<path d="M826.1 281.6 L833.1 280.0 L832.3 303.5 L825.4 305.4 Z" fill="#4b4cb6" />
<path d="M825.2 311.2 L832.1 309.3 L831.9 314.0 L825.0 316.0 Z" fill="#353638" />
<path d="M825.0 316.0 L831.9 314.0 L831.2 334.1 L824.4 336.4 Z" fill="#b44cb0" />
<path d="M804.1 252.0 L807.1 251.5 L806.5 277.0 L803.6 277.6 Z" fill="#22aebf" />
<path d="M815.1 250.2 L821.1 249.3 L820.4 274.1 L814.4 275.3 Z" fill="#353638" />
<path d="M835.1 247.0 L840.1 246.2 L839.2 270.1 L834.3 271.2 Z" fill="#22aebf" />
<path d="M927.5 197.4 L933.0 196.9 L931.9 211.3 L926.4 212.0 Z" fill="#353638" />
<path d="M926.4 212.0 L931.9 211.3 L930.7 225.5 L925.2 226.3 Z" fill="#3f9a45" />
<path d="M925.0 229.6 L930.4 228.7 L928.6 251.0 L923.2 252.2 Z" fill="#22aebf" />
<path d="M922.8 257.4 L928.2 256.3 L928.0 258.7 L922.6 259.9 Z" fill="#353638" />
<path d="M922.6 259.9 L928.0 258.7 L926.4 278.2 L921.0 279.6 Z" fill="#4b4cb6" />
<path d="M920.6 284.5 L926.0 283.0 L925.7 286.9 L920.3 288.4 Z" fill="#353638" />
<path d="M920.3 288.4 L925.7 286.9 L924.3 303.7 L919.0 305.5 Z" fill="#b44cb0" />
<path d="M935.6 196.7 L940.6 196.3 L939.4 210.5 L934.4 211.1 Z" fill="#353638" />
<path d="M934.4 211.1 L939.4 210.5 L938.2 224.4 L933.2 225.1 Z" fill="#3f9a45" />
<path d="M932.9 228.3 L937.9 227.5 L936.0 249.5 L931.1 250.5 Z" fill="#22aebf" />
<path d="M930.7 255.7 L935.6 254.6 L935.4 257.0 L930.5 258.1 Z" fill="#353638" />
<path d="M930.5 258.1 L935.4 257.0 L933.8 276.2 L928.9 277.5 Z" fill="#4b4cb6" />
<path d="M928.5 282.3 L933.4 280.9 L933.0 284.8 L928.1 286.2 Z" fill="#353638" />
<path d="M928.1 286.2 L933.0 284.8 L931.6 301.3 L926.7 302.9 Z" fill="#b44cb0" />
<path d="M942.6 196.1 L947.6 195.7 L946.4 209.7 L941.4 210.2 Z" fill="#353638" />
<path d="M941.4 210.2 L946.4 209.7 L945.2 223.3 L940.2 224.1 Z" fill="#3f9a45" />
<path d="M939.9 227.2 L944.9 226.5 L943.0 248.1 L938.0 249.1 Z" fill="#22aebf" />
<path d="M937.6 254.2 L942.5 253.1 L942.3 255.4 L937.4 256.6 Z" fill="#353638" />
<path d="M937.4 256.6 L942.3 255.4 L940.6 274.3 L935.7 275.6 Z" fill="#4b4cb6" />
<path d="M935.3 280.4 L940.2 279.0 L939.9 282.8 L935.0 284.2 Z" fill="#353638" />
<path d="M935.0 284.2 L939.9 282.8 L938.4 299.1 L933.6 300.7 Z" fill="#b44cb0" />
<path d="M771.3 284.3 L957.8 245.4 L957.4 249.8 L771.3 290.7 Z" fill="#f4f2e6" />
<path d="M771.1 320.0 L955.4 270.3 L955.0 274.9 L771.1 326.4 Z" fill="#f4f2e6" />
<path d="M868.3 299.1 L880.9 295.6 L878.8 330.9 L866.4 335.3 Z" fill="#2a2b2e" />
<path d="M880.9 295.6 L883.0 295.0 L881.1 326.5 L879.0 327.2 Z" fill="#3c3d40" />
<path d="M785.4 313.0 L820.0 303.5 L820.0 312.0 L785.4 321.0 Z" fill="#3a3b3d" />
<path d="M908.2 281.0 L935.6 275.0 L935.6 283.0 L908.2 289.0 Z" fill="#3a3b3d" />
<path d="M771.0 355.5 L953.0 295.5 L952.3 298.7 L891.6 323.2 L859.0 340.4 L771.0 370.5 Z" fill="#2e2f31" />
<path d="M771.5 236 L771 355.5" stroke="#8a8a8a" stroke-width="0.8"/>
<defs><pattern id="stp" width="3" height="2" patternUnits="userSpaceOnUse"><rect width="3" height="2" fill="#8c8c8c"/><rect width="3" height="0.9" fill="#d4d4d4"/></pattern></defs>
<path d="M502.2 307.0 L510.0 304.5 L524.5 308.0 L523.3 315.0 L506.9 321.0 L502.0 316.0 Z" fill="url(#stp)" />
<path d="M787.0 362.8 L806.0 338.0 L817.0 338.0 L817.0 348.0 L799.0 363.0 Z" fill="url(#stp)" />
<path d="M909.0 317.4 L921.0 300.0 L933.0 300.0 L933.0 310.0 L918.0 318.0 Z" fill="url(#stp)" />
<defs><linearGradient id="gb" x1="0" x2="1"><stop offset="0" stop-color="#e8ece0"/><stop offset="0.6" stop-color="#b8d8d0"/><stop offset="1" stop-color="#3aa0a0"/></linearGradient></defs>
<rect x="865" y="322.4" width="13" height="10" fill="url(#gb)"/>
<rect x="858" y="332" width="4" height="8" fill="#2a9a9a"/>
<path d="M526.7 189.3 L527.5 212.5" stroke="#9a9a9a" stroke-width="0.9"/>
<path d="M565 188.5 L565.8 215" stroke="#9a9a9a" stroke-width="0.9"/>
<path d="M570.7 188 L571.5 212" stroke="#9a9a9a" stroke-width="0.9"/>
<path d="M601 189 L601.8 206" stroke="#9a9a9a" stroke-width="0.9"/>
<path d="M608.5 186 L609.3 207" stroke="#9a9a9a" stroke-width="0.9"/>
<path d="M644 185 L644.8 205" stroke="#9a9a9a" stroke-width="0.9"/>
<path d="M687 185 L687.8 193" stroke="#9a9a9a" stroke-width="0.9"/>
<path d="M744.8 166 L745.5999999999999 195" stroke="#9a9a9a" stroke-width="0.9"/>
<path d="M775 165 L775.8 193" stroke="#9a9a9a" stroke-width="0.9"/>
<path d="M858.5 166 L859.3 190" stroke="#9a9a9a" stroke-width="0.9"/>
<path d="M893 166 L893.8 185" stroke="#9a9a9a" stroke-width="0.9"/>
<path d="M740 217 V235" stroke="#0000ff" stroke-width="1.5"/><path d="M730 237 L740 235" stroke="#ff0000" stroke-width="1.5"/><path d="M740 235 L753 236" stroke="#00d000" stroke-width="1.5"/>
<circle cx="159" cy="325" r="46" fill="#040404"/>
<path d="M159 325 V303" stroke="#0000ff" stroke-width="2"/><path d="M156 305 L159 296.5 L162 305 Z" fill="#0000ff"/>
<path d="M159 325 L141 331" stroke="#ff0000" stroke-width="2"/><path d="M143 328 L137.5 332 L144 334 Z" fill="#ff0000"/>
<path d="M159 325 L177 330" stroke="#00e000" stroke-width="2"/><path d="M175.5 327 L183 331.5 L175 333.5 Z" fill="#00e000"/>
<circle cx="159" cy="325" r="4.6" fill="#9a9a9a"/><circle cx="158" cy="323.5" r="0.9" fill="#fff"/>
<text x="161.6" y="291.5" font-size="9" fill="#0000ff" text-anchor="middle" font-family="Liberation Sans">Z</text>
<text x="134.5" y="335.5" font-size="9" fill="#ff0000" text-anchor="middle" font-family="Liberation Sans">X</text>
<text x="193" y="334" font-size="9" fill="#00d000" text-anchor="middle" font-family="Liberation Sans">Y</text>
<path d="M1102 87.5 L1141 82 L1180 86.8 L1145 94 Z" fill="#fafafa" stroke="#333" stroke-width="0.8"/>
<path d="M1102 87.5 L1145 94 L1145 158 L1107 137 Z" fill="#fcfcfc" stroke="#333" stroke-width="0.8"/>
<path d="M1145 94 L1180 86.8 L1176.5 135 L1145 158 Z" fill="#f6f6f6" stroke="#333" stroke-width="0.8"/>
<text x="0" y="0" font-size="9" fill="#8a8a8a" font-family="Liberation Sans" transform="translate(1111.5,121) matrix(0.75,0.3,0,1.55,0,0)">Справа</text>
<text x="0" y="0" font-size="9" fill="#8a8a8a" font-family="Liberation Sans" transform="translate(1154,131) matrix(0.77,-0.36,0,1.55,0,0)">Сзади</text>
<rect x="5" y="6" width="48" height="16" fill="#fff"/>
<path d="M9.9 9.5 V18.4 M12.3 10.2 H16.3 Q18.4 10.2 18.4 12 Q18.4 13.9 16.3 13.9 H12.6 M12.3 17.7 H16.5 Q18.8 17.7 18.8 15.8 Q18.8 13.9 16.5 13.9" fill="none" stroke="#1c1c1c" stroke-width="1.6" stroke-linejoin="bevel"/>
<path d="M21.6 12.6 V18.4 M25.3 18.4 V10.2 L30.4 17.2 L35.4 10.2 V18.4 M39.1 12.6 V18.4 M42.3 10.3 H49.7 M46 10.3 V18.4" fill="none" stroke="#1c1c1c" stroke-width="1.6" stroke-linejoin="bevel"/>
<circle cx="21.6" cy="10.4" r="0.95" fill="#1c1c1c"/>
<circle cx="39.1" cy="10.4" r="1.05" fill="#e00"/>
<rect x="301" y="9" width="18" height="12.5" rx="1.5" fill="none" stroke="#e0e0e0" stroke-width="2" stroke-linejoin="round" stroke-width="1.8"/>
<path d="M306.5 8.5 V5.5 Q306.5 5 307 5 H313 Q313.5 5 313.5 5.5 V8.5" fill="none" stroke="#e0e0e0" stroke-width="2" stroke-linejoin="round" stroke-width="1.8"/>
<path d="M301 13.7 H319" fill="none" stroke="#e0e0e0" stroke-width="2" stroke-linejoin="round" stroke-width="1.8"/><rect x="308.5" y="13" width="3" height="3" fill="#e0e0e0"/>
<circle cx="344" cy="9" r="2.4" fill="none" stroke="#e0e0e0" stroke-width="2" stroke-linejoin="round" stroke-width="1.6"/>
<path d="M338.8 21.5 V17.5 Q339 13.8 344 13.8 Q349 13.8 349.4 17.5 V21.5 Z" fill="none" stroke="#e0e0e0" stroke-width="2" stroke-linejoin="round" stroke-width="1.7"/>
<circle cx="336" cy="12.8" r="2.1" fill="#e0e0e0"/><circle cx="352.2" cy="12.8" r="2.1" fill="#e0e0e0"/>
<path d="M332 22 V18.5 Q332.5 16 336.5 16 V22 Z M356.5 22 V18.5 Q356 16 352 16 V22 Z" fill="#e0e0e0"/>
<path d="M378 17 Q377 21.5 376 22.5 Q370 19 369.5 13 V8 Q374 7 376 5.2 Q379 7 384 8 V14" fill="none" stroke="#e0e0e0" stroke-width="2" stroke-linejoin="round" stroke-width="1.7"/>
<circle cx="383.2" cy="19" r="5.3" fill="none" stroke="#e0e0e0" stroke-width="2" stroke-linejoin="round" stroke-width="1.7"/>
<circle cx="383.2" cy="17.5" r="1.4" fill="#e0e0e0"/><path d="M380.5 21.2 Q383.2 19.5 386 21.2 Z" fill="#e0e0e0" stroke="#e0e0e0" stroke-width="0.8"/>
<path d="M578.8 11 H589.3 L584 16.2 Z" fill="#f2f2f2"/>
<path d="M994.37 12.13 L996.87 12.39 L996.87 15.61 L994.37 15.87 L993.53 17.89 L995.12 19.84 L992.84 22.12 L990.89 20.53 L988.87 21.37 L988.61 23.87 L985.39 23.87 L985.13 21.37 L983.11 20.53 L981.16 22.12 L978.88 19.84 L980.47 17.89 L979.63 15.87 L977.13 15.61 L977.13 12.39 L979.63 12.13 L980.47 10.11 L978.88 8.16 L981.16 5.88 L983.11 7.47 L985.13 6.63 L985.39 4.13 L988.61 4.13 L988.87 6.63 L990.89 7.47 L992.84 5.88 L995.12 8.16 L993.53 10.11 Z" fill="none" stroke="#e0e0e0" stroke-width="1.8" stroke-linejoin="round"/><circle cx="987" cy="14" r="3.5" fill="none" stroke="#e0e0e0" stroke-width="1.8"/>
<path d="M1014 21.7 Q1015 13.5 1025 13 V9.5 L1032 14.8 L1025 20 V16.5 Q1018 16 1014 21.7 Z" fill="none" stroke="#e0e0e0" stroke-width="1.6" stroke-linejoin="round"/>
<circle cx="1486.7" cy="11.1" r="5.3" fill="none" stroke="#e0e0e0" stroke-width="2" stroke-linejoin="round" stroke-width="2"/>
<path d="M1490.8 15.2 L1497.5 21.9" fill="none" stroke="#e0e0e0" stroke-width="2" stroke-linejoin="round" stroke-width="2.2"/>
<circle cx="1549.4" cy="7.5" r="1.4" fill="#e0e0e0"/><path d="M1552.8 7.5 H1566.6" stroke="#e0e0e0" stroke-width="2.4" stroke-linecap="round"/>
<circle cx="1549.4" cy="13.5" r="1.4" fill="#e0e0e0"/><path d="M1552.8 13.5 H1566.6" stroke="#e0e0e0" stroke-width="2.4" stroke-linecap="round"/>
<circle cx="1549.4" cy="19.5" r="1.4" fill="#e0e0e0"/><path d="M1552.8 19.5 H1566.6" stroke="#e0e0e0" stroke-width="2.4" stroke-linecap="round"/>
<path d="M1590.8 4.2 Q1592 4.5 1592 6 Q1596.5 7.5 1596.5 13 V18 L1598 20 H1583.5 L1585 18 V13 Q1585 7.5 1589.6 6 Q1589.6 4.5 1590.8 4.2 Z" fill="#e0e0e0"/>
<path d="M1588.5 21 Q1590.8 24 1593 21 Z" fill="#e0e0e0"/>
<circle cx="1598" cy="20.8" r="4" fill="#9a0000"/>
<path d="M1628.5 8.3 A7 7 0 1 0 1631 19" fill="none" stroke="#e0e0e0" stroke-width="2.2"/>
<path d="M1625.5 3.5 L1630.3 8 L1625.5 12.5 Z" fill="#e0e0e0"/>
<text x="1625.2" y="18.6" font-size="6.5" font-weight="700" text-anchor="middle" fill="#e0e0e0" font-family="Liberation Sans">10</text>
<circle cx="1632" cy="20.8" r="4" fill="#9a0000"/>
<rect x="1650" y="5.1" width="18" height="17.7" rx="2" fill="#e0e0e0"/>
<circle cx="1659" cy="11.2" r="2.9" fill="#555"/><path d="M1653 19.3 Q1653.5 15.5 1659 15.5 Q1664.5 15.5 1665 19.3 Z" fill="#555"/>
<rect x="5" y="38" width="48" height="48" fill="#555"/>
<rect x="5" y="88" width="48" height="48" fill="#555"/>
<rect x="5" y="138" width="48" height="48" fill="#555"/>
<rect x="5" y="188" width="48" height="48" fill="#555"/>
<rect x="5" y="238" width="48" height="48" fill="#555"/>
<rect x="5" y="288" width="48" height="48" fill="#555"/>
<rect x="5" y="338" width="48" height="48" fill="#555"/>
<rect x="5" y="388" width="48" height="48" fill="#555"/>
<rect x="5" y="438" width="48" height="48" fill="#555"/>
<rect x="5" y="488" width="48" height="48" fill="#555"/>
<rect x="5" y="538" width="48" height="48" fill="#555"/>
<g transform="translate(5,38)"><rect x="8" y="9" width="11.6" height="6" rx="3" fill="#e0e0e0"/><path d="M19 12 H22 Q24 12 24 14 V36 H29 M24 16 H29 M24 26 H29" fill="none" stroke="#e0e0e0" stroke-width="2" stroke-linecap="round" stroke-linejoin="round" stroke-linecap="butt"/><rect x="31" y="13.8" width="9" height="4.4" rx="2.2" fill="#e0e0e0"/><rect x="31" y="23.8" width="9" height="4.4" rx="2.2" fill="#e0e0e0"/><rect x="31" y="33.8" width="9" height="4.4" rx="2.2" fill="#e0e0e0"/></g>
<g transform="translate(5,88)" fill="none" stroke="#e0e0e0" stroke-width="2" stroke-linecap="round" stroke-linejoin="round" stroke-width="1.8"><path d="M10.5 14.5 C20 14.5 22 31 39.5 31"/><path d="M10.5 31 C20 31 22 14.5 39.5 14.5"/><path d="M31.5 8.5 L39.5 14.5 L31.5 20.5"/><path d="M31.5 25 L39.5 31 L31.5 37"/></g>
<g transform="translate(5,138)" fill="none" stroke="#e0e0e0" stroke-width="2" stroke-linecap="round" stroke-linejoin="round" stroke-width="2.2"><path d="M31 13.5 Q23 12.5 15.5 13 L25 23 L15.5 32.5 Q23 33.5 31 32.5"/></g>
<g transform="translate(5,188)" fill="none" stroke="#e0e0e0" stroke-width="2" stroke-linecap="round" stroke-linejoin="round" stroke-width="2.2"><path d="M27 14 Q19.5 13 12 13.5 L21 23.5 L12 33.5 Q19.5 34.5 27 33.5"/><path d="M33 19.5 V28.5 M28.5 24 H37.5" stroke-width="1.8"/></g>
<g transform="translate(5,238)"><path d="M11.5 9 Q24 8 36.5 9.5 Q33.5 22 35 37.5 H11.5 Z" fill="none" stroke="#e0e0e0" stroke-width="1.6"/><path d="M24 37.5 Q26 34.5 34 34.8 L35 37.5 Z" fill="#e0e0e0"/><text x="23.3" y="27.6" font-size="11" text-anchor="middle" fill="#e0e0e0" font-family="Liberation Sans">2D</text></g>
<g transform="translate(5,288)" fill="none" stroke="#e0e0e0" stroke-width="2" stroke-linecap="round" stroke-linejoin="round" stroke-width="1.8"><path d="M12.5 16 Q17 9 20 11 Q23 13 25.5 18 Q30 14 37 8.5"/><path d="M12.5 24.5 Q14.5 21 17 23 Q20 28 22 29 Q29 25 35.5 24"/><path d="M12.5 36 H35.5" stroke-width="2.2" stroke-linecap="butt"/></g>
<g transform="translate(5,338)" fill="none" stroke="#e0e0e0" stroke-width="2" stroke-linecap="round" stroke-linejoin="round" stroke-width="1.8"><path d="M13 14 H19.5 V12 Q19.5 8.5 23 8.5 Q26.5 8.5 26.5 12 V14 H33 V20.5 H35 Q38.5 20.5 38.5 24 Q38.5 27.5 35 27.5 H33 V35.5 H26.5 V33.5 Q26.5 30.5 23 30.5 Q19.5 30.5 19.5 33.5 V35.5 H13 V27 H14 Q16.5 27 16.5 24 Q16.5 21 14 21 H13 Z"/></g>
<g transform="translate(5,388)" fill="none" stroke="#e0e0e0" stroke-width="2" stroke-linecap="round" stroke-linejoin="round" stroke-width="1.8"><circle cx="23.5" cy="16" r="6.3"/><path d="M22 33.5 H12 Q12.5 24.5 23.5 24 Q31 24.2 34 30"/><path d="M28 32 L32.5 38 L39.5 29.5" stroke-width="2.6"/></g>
<g transform="translate(5,438)" fill="none" stroke="#e0e0e0" stroke-width="2" stroke-linecap="round" stroke-linejoin="round" stroke-width="1.6"><path d="M8.5 13 Q8.5 12.5 9.5 12.5 H19 L21 15.5 H32.5 Q34 24 35 34.5 H13.5 Q10 24 8.5 13 Z"/><path d="M34 25.5 H39.5 L34.5 34.5"/><path d="M34 26.5 H21.5 M25.5 22.5 L21.5 26.5 L25.5 30.5"/></g>
<g transform="translate(5,488)" fill="none" stroke="#e0e0e0" stroke-width="2" stroke-linecap="round" stroke-linejoin="round" stroke-width="1.8"><circle cx="18.5" cy="15.5" r="5.5"/><path d="M27 30 H8.5 Q9 22 18.5 21.5 Q22.5 21.5 25 23.5"/><path d="M32.8 37 Q27 30.5 27 27.5 Q27 22 32.8 22 Q38.5 22 38.5 27.5 Q38.5 30.5 32.8 37 Z"/></g><circle cx="37.8" cy="516.3" r="1.5" fill="#e0e0e0"/>
<g transform="translate(5,538)" fill="none" stroke="#e0e0e0" stroke-width="2" stroke-linecap="round" stroke-linejoin="round" stroke-width="1.8"><circle cx="23.6" cy="22" r="13.3"/><path d="M9 39 H39" stroke-width="2.2" stroke-linecap="butt"/><path d="M23.6 35.5 V39"/><path d="M15 17 l0.6 0.6 M18.5 13.5 l0.3 0.8 M23.6 12 v0.8 M28.5 13 l-0.3 0.8 M32 16 l-0.6 0.6" stroke-width="1.2"/></g><path d="M25.5 552 L31 565 Q31 567.5 28.5 567.5 Q26 567.5 26 565 Z" fill="#e0e0e0"/>
<circle cx="28" cy="829" r="12" fill="#555"/>
<text x="28" y="834.5" font-size="15" font-weight="700" text-anchor="middle" fill="#f0f0f0" font-family="Liberation Sans">?</text>
<rect x="69" y="38" width="32" height="32" fill="#555"/>
<path d="M73.5 50 V42.5 H81 M89 42.5 H96.8 V50 M96.8 58 V65.7 H89 M81 65.7 H73.5 V58" fill="none" stroke="#e0e0e0" stroke-width="1.6"/>
<path d="M85.00 47.70 L90.46 50.85 L90.46 57.15 L85.00 60.30 L79.54 57.15 L79.54 50.85 Z" fill="#e0e0e0"/>
<rect x="1647" y="38" width="36" height="92" fill="#555"/>
<rect x="1647" y="132" width="36" height="223" fill="#555"/>
<rect x="1647" y="357" width="36" height="47" fill="#555"/>
<rect x="1647" y="406" width="36" height="178" fill="#555"/>
<rect x="1647" y="586" width="36" height="92" fill="#555"/>
<rect x="1647" y="680" width="36" height="168" fill="#555"/>
<rect x="1649" y="46" width="32" height="32" fill="#8c8c8c"/>
<path d="M1661 68 H1659 Q1654.2 68 1654.2 63 Q1654.2 59 1658 58 Q1658 50.5 1665.4 50.5 Q1672.5 50.5 1673 58 Q1676.8 59 1676.8 63 Q1676.8 68 1672 68 H1670" fill="none" stroke="#e0e0e0" stroke-width="1.5" stroke-linejoin="round"/>
<path d="M1665.4 55.8 V73.2 M1665.4 64 L1670 60.5 M1665.4 61 L1660.5 57.5" fill="none" stroke="#e0e0e0" stroke-width="1.5" stroke-linejoin="round"/>
<path d="M1659.5 110.2 H1652.4 V93.3 H1675.7 V102" fill="none" stroke="#e0e0e0" stroke-width="1.5" stroke-linejoin="round"/>
<path d="M1657 113 H1660.5 V111" fill="none" stroke="#e0e0e0" stroke-width="1.5" stroke-linejoin="round"/>
<path d="M1662.5 106.5 V102.5 H1666.5 M1673.5 102.5 H1677.5 V106.5 M1677.5 114.5 V118.3 H1673.5 M1666.5 118.3 H1662.5 V114.5" fill="none" stroke="#e0e0e0" stroke-width="1.5" stroke-linejoin="round"/>
<path d="M1669.90 106.30 L1673.54 108.40 L1673.54 112.60 L1669.90 114.70 L1666.26 112.60 L1666.26 108.40 Z" fill="#e0e0e0"/>
<rect x="1652.5" y="149.8" width="25.5" height="8.5" fill="none" stroke="#e0e0e0" stroke-width="1.5" stroke-linejoin="round" stroke-width="1.4"/>
<path d="M1655 158 V153.5 M1659.5 158 V155 M1664 158 V153.5 M1668.5 158 V155 M1673 158 V153.5" stroke="#e0e0e0" stroke-width="1.2"/>
<path d="M1652 161 H1678.3" stroke="#e0e0e0" stroke-width="1.8"/>
<path d="M1659.8 192.8 L1669.9 184.9 V203.9 L1659.8 212.3 Z" fill="#e0e0e0"/>
<path d="M1652 201.8 L1659.8 194.9 H1678.3 L1670.4 201.8 Z" fill="none" stroke="#e0e0e0" stroke-width="1.5" stroke-linejoin="round" stroke-width="1.2"/>
<path d="M1653.3 236.9 H1669.9 V253.8 H1653.3 Z M1660.9 232.1 H1676.7 V249 H1660.9 Z M1653.3 236.9 L1660.9 232.1 M1669.9 236.9 L1676.7 232.1 M1669.9 253.8 L1676.7 249 M1653.3 253.8 L1660.9 249" fill="none" stroke="#e0e0e0" stroke-width="1.5" stroke-linejoin="round" stroke-width="1.1"/>
<path d="M1662.5 234.5 L1666.7 232.1 V249 L1662.5 253 Z" fill="#e0e0e0"/>
<path d="M1653.5 276 H1676.5 V296 H1653 V278.5 Z" fill="none" stroke="#e0e0e0" stroke-width="1.4"/>
<path d="M1676.5 277.5 H1678.8 V298.2 H1653.2 V296" fill="none" stroke="#e0e0e0" stroke-width="1.6"/>
<path d="M1651 278.5 L1653.5 276 V278.5 Z" fill="#e0e0e0"/>
<path d="M1663.7 276.5 V296 M1653 285.5 H1676.5" stroke="#e0e0e0" stroke-width="1.1" stroke-dasharray="2 1.5"/>
<rect x="1669.5" y="292.5" width="6.5" height="3.5" fill="none" stroke="#e0e0e0" stroke-width="1"/>
<circle cx="1665.1" cy="331.1" r="7.2" fill="none" stroke="#e0e0e0" stroke-width="1.6"/><circle cx="1665.1" cy="331.1" r="3.8" fill="#e0e0e0"/>
<path d="M1665.1 320.5 V323.5 M1665.1 338.7 V341.7 M1654.5 331.1 H1657.5 M1672.7 331.1 H1675.7" stroke="#e0e0e0" stroke-width="1.8"/>
<path d="M1650 384 L1679.5 367.5 M1650 394 L1679.5 377.5 M1651 378.5 L1669 389.5 M1659.5 372.5 L1678.5 382.5" stroke="#e0e0e0" stroke-width="1.1"/>
<text x="1651.3" y="377" font-size="6.5" fill="#e0e0e0" font-family="Liberation Sans">1</text><text x="1660" y="370.5" font-size="6.5" fill="#e0e0e0" font-family="Liberation Sans">2</text>
<rect x="1653.6" y="417.3" width="22.8" height="23.00000000000002" fill="none" stroke="#e0e0e0" stroke-width="1.2" stroke-dasharray="2 2"/>
<rect x="1653.6" y="461.3" width="22.8" height="22.799999999999976" fill="none" stroke="#e0e0e0" stroke-width="1.2" stroke-dasharray="2 2"/>
<rect x="1653.6" y="505.6" width="22.8" height="22.599999999999987" fill="none" stroke="#e0e0e0" stroke-width="1.2" stroke-dasharray="2 2"/>
<rect x="1653.6" y="549.5999999999999" width="22.8" height="22.600000000000044" fill="none" stroke="#e0e0e0" stroke-width="1.2" stroke-dasharray="2 2"/>
<path d="M1665 422 L1671 425.5 V432.5 L1665 436 L1659 432.5 V425.5 Z M1659 425.5 L1665 429 L1671 425.5 M1665 429 V436" fill="none" stroke="#e0e0e0" stroke-width="1.1"/>
<path d="M1657.8 472.8 Q1665 465 1672.2 472.8 Q1665 480.6 1657.8 472.8 Z" fill="#e0e0e0"/><circle cx="1665" cy="472.8" r="2.6" fill="#555"/><circle cx="1665" cy="472.8" r="1.3" fill="#e0e0e0"/>
<path d="M1657 517 Q1665 509 1673 517 Q1665 525 1657 517 Z" fill="#e0e0e0"/><circle cx="1666" cy="516.5" r="2.6" fill="#555"/>
<path d="M1658.5 510.5 L1671.5 524" stroke="#555" stroke-width="2.2"/><path d="M1658 510 L1671.5 523.5" stroke="#e0e0e0" stroke-width="1.1"/>
<rect x="1663" y="559" width="15.8" height="15.4" fill="#d8d8d8"/>
<path d="M1666.5 562.5 L1675.3 571 M1675.3 562.5 L1666.5 571" stroke="#444" stroke-width="1.2"/>
<rect x="1649.2" y="594.2" width="31.8" height="31.6" fill="#8c8c8c"/>
<path d="M1653.3 599.5 L1665 598 L1676 600.5 L1674.3 613 L1665 622 L1656 614 Z" fill="#e0e0e0"/>
<path d="M1665 603 L1674.8 601.5 L1673.5 613 L1665 621.5 Z" fill="#8a8a8a"/>
<path d="M1653.3 599.5 L1665 603 L1676 600.5" fill="none" stroke="#777" stroke-width="0.7"/>
<rect x="1649.2" y="638" width="31.8" height="31.7" fill="#8c8c8c"/>
<ellipse cx="1665" cy="654" rx="11" ry="5.6" fill="none" stroke="#e0e0e0" stroke-width="1.5"/>
<ellipse cx="1665" cy="654" rx="4.6" ry="10.7" fill="none" stroke="#e0e0e0" stroke-width="1.5"/>
<path d="M1665 650 V654.5 L1661 658 M1665 654.5 L1669 658" stroke="#e0e0e0" stroke-width="0.9"/>
<rect x="639" y="461" width="42" height="3" fill="#3a97b6"/>
<path d="M75 474 H88" stroke="#e0e0e0" stroke-width="2"/>
<path d="M75 478 H88" stroke="#e0e0e0" stroke-width="2"/>
<path d="M75 482 H84" stroke="#e0e0e0" stroke-width="2"/>
<path d="M86 481 L91 484 L86 487 Z" fill="#e0e0e0"/>
<circle cx="1060.9" cy="480" r="8.9" fill="none" stroke="#aaa" stroke-width="1.8"/>
<path d="M1055.8 480.5 L1059.2 484 L1066 476.8" fill="none" stroke="#aaa" stroke-width="1.8"/>
<path d="M1085 479.4 Q1093 471.5 1101 479.4 Q1093 487.3 1085 479.4 Z" fill="none" stroke="#3e3e3e" stroke-width="1.2"/><circle cx="1093" cy="479.4" r="2.3" fill="none" stroke="#3e3e3e" stroke-width="1.2"/>
<path d="M1122 470.5 L1124 469 L1126.5 472.5 L1133 480 L1125.5 484.7 L1118.5 477 Z" fill="#e0e0e0"/>
<path d="M1121.5 477 L1126.5 474.5 L1130.5 479 Z" fill="#555"/>
<path d="M1133.8 480.5 Q1136.5 484 1134.5 485.2 Q1132 485.8 1132.8 482.5 Z" fill="#e0e0e0"/>
<path d="M1151 473.3 H1156 V485 H1151 Z M1157 473.3 H1162 V485 H1157 Z M1163 473.3 H1167.7 V485 H1163 Z" fill="#e0e0e0"/>
<path d="M1199.69 478.30 L1201.98 478.53 L1201.98 481.47 L1199.69 481.70 L1198.93 483.53 L1200.39 485.31 L1198.31 487.39 L1196.53 485.93 L1194.70 486.69 L1194.47 488.98 L1191.53 488.98 L1191.30 486.69 L1189.47 485.93 L1187.69 487.39 L1185.61 485.31 L1187.07 483.53 L1186.31 481.70 L1184.02 481.47 L1184.02 478.53 L1186.31 478.30 L1187.07 476.47 L1185.61 474.69 L1187.69 472.61 L1189.47 474.07 L1191.30 473.31 L1191.53 471.02 L1194.47 471.02 L1194.70 473.31 L1196.53 474.07 L1198.31 472.61 L1200.39 474.69 L1198.93 476.47 Z M1195.6 480 A2.6 2.6 0 1 0 1190.4 480 A2.6 2.6 0 1 0 1195.6 480 Z" fill="#e0e0e0" fill-rule="evenodd"/>
<rect x="89" y="504" width="16" height="16" rx="1.5" fill="#666" stroke="#fafafa" stroke-width="2"/>
<rect x="69" y="548" width="1138" height="1" fill="#dcdcdc"/>
<rect x="89" y="527.5" width="16" height="16" rx="1.5" fill="none" stroke="#666" stroke-width="2"/>
<path d="M146 534 L149.2 536.25 L146 538.5 Z" fill="#555"/>
<rect x="403.5" y="526.5" width="139" height="18" fill="#c558ab" stroke="#333" stroke-width="1"/>
<rect x="69" y="573" width="1138" height="1" fill="#dcdcdc"/>
<rect x="89" y="552.5" width="16" height="16" rx="1.5" fill="none" stroke="#666" stroke-width="2"/>
<path d="M146 559 L149.2 561.25 L146 563.5 Z" fill="#555"/>
<rect x="403.5" y="551.5" width="139" height="18" fill="#05c6e4" stroke="#333" stroke-width="1"/>
<rect x="69" y="598" width="1138" height="1" fill="#dcdcdc"/>
<rect x="89" y="577.5" width="16" height="16" rx="1.5" fill="none" stroke="#666" stroke-width="2"/>
<path d="M146 584 L149.2 586.25 L146 588.5 Z" fill="#555"/>
<rect x="403.5" y="576.5" width="139" height="18" fill="#ee9c06" stroke="#333" stroke-width="1"/>
<rect x="69" y="623" width="1138" height="1" fill="#dcdcdc"/>
<rect x="89" y="602.5" width="16" height="16" rx="1.5" fill="none" stroke="#666" stroke-width="2"/>
<path d="M146 609 L149.2 611.25 L146 613.5 Z" fill="#555"/>
<rect x="403.5" y="601.5" width="139" height="18" fill="#5c5ec8" stroke="#333" stroke-width="1"/>
<rect x="89" y="627.5" width="16" height="16" rx="1.5" fill="none" stroke="#666" stroke-width="2"/>
<path d="M146 634 L149.2 636.25 L146 638.5 Z" fill="#555"/>
<rect x="403.5" y="626.5" width="139" height="18" fill="#57c766" stroke="#333" stroke-width="1"/>
<path d="M1229 56 H1242" stroke="#e0e0e0" stroke-width="2"/>
<path d="M1229 60 H1242" stroke="#e0e0e0" stroke-width="2"/>
<path d="M1229 64 H1238" stroke="#e0e0e0" stroke-width="2"/>
<path d="M1240 63 L1245 66 L1240 69 Z" fill="#e0e0e0"/>
<path d="M1616.8 94.5 H1627.3 L1622 100 Z" fill="#e4e4e4"/>
<path d="M1220 842 L1224.5 846 H1220 Z" fill="#fff"/>
<rect x="1223" y="114.6" width="411" height="1.5" fill="#d4d4d4"/>
<rect x="1554" y="140" width="72" height="2.2" fill="#f0f0f0"/>
<path d="M1230.5 159.5 V169 M1225.8 164.3 H1235.2" stroke="#4b97b5" stroke-width="1.4"/>
<circle cx="1512.5" cy="167.8" r="6.3" fill="none" stroke="#6fb0c8" stroke-width="1" stroke-dasharray="1.3 1.3"/>
<path d="M1512.5 172.8 Q1516.5 168.8 1520.5 172.8 Q1516.5 176.8 1512.5 172.8 Z" fill="#fff" stroke="#4b97b5" stroke-width="0.9"/><circle cx="1516.5" cy="172.8" r="1.1" fill="#4b97b5"/>
<path d="M1508 166.5 Q1512 169 1516.5 166" fill="none" stroke="#6fb0c8" stroke-width="0.8"/>
<defs><filter id="sh" x="-5%" y="-30%" width="110%" height="180%"><feGaussianBlur in="SourceAlpha" stdDeviation="2"/><feOffset dy="2"/><feComponentTransfer><feFuncA type="linear" slope="0.35"/></feComponentTransfer><feMerge><feMergeNode/><feMergeNode in="SourceGraphic"/></feMerge></filter><filter id="ash" x="-50%" y="-20%" width="200%" height="140%"><feGaussianBlur in="SourceAlpha" stdDeviation="2.2"/><feOffset dx="3" dy="2"/><feComponentTransfer><feFuncA type="linear" slope="0.45"/></feComponentTransfer><feMerge><feMergeNode/><feMergeNode in="SourceGraphic"/></feMerge></filter></defs>
<rect x="1223" y="183.5" width="410.5" height="36" rx="4" fill="#f0f0f0" filter="url(#sh)"/>
<path d="M1235 203 H1242 L1238.5 206 Z" fill="#666"/>
<circle cx="1473.9" cy="202.9" r="8.9" fill="none" stroke="#a2a5a8" stroke-width="1.9"/>
<path d="M1468.6 204.2 L1473.1 207.7 L1479.3 200" fill="none" stroke="#a2a5a8" stroke-width="2"/>
<path d="M1489.8 204.2 Q1497.9 192.5 1506 204.2 Q1497.9 215.9 1489.8 204.2 Z" fill="none" stroke="#2a2a2a" stroke-width="1.1"/><circle cx="1497.9" cy="204.2" r="2.9" fill="none" stroke="#2a2a2a" stroke-width="1.1"/>
<rect x="1516" y="192.8" width="19.9" height="19.9" fill="#222"/>
<rect x="1517.3" y="194.1" width="8.7" height="8.7" fill="#4ac48a"/><rect x="1526" y="194.1" width="8.6" height="8.7" fill="#c555ab"/>
<rect x="1517.3" y="202.8" width="8.7" height="8.6" fill="#ee9c08"/><rect x="1526" y="202.8" width="8.6" height="8.6" fill="#5b5dc8"/>
<path d="M1561 209.7 V196 Q1561 194.5 1562.5 194.5 H1576.5 Q1578 194.5 1578 196 V203" fill="none" stroke="#a2a5a8" stroke-width="1.8"/>
<rect x="1561" y="194.2" width="17" height="4.2" fill="#a2a5a8"/>
<path d="M1561 203 H1578 M1569.2 198 V209.7 M1561 209.7 H1569.2" fill="none" stroke="#a2a5a8" stroke-width="1.7"/>
<path d="M1573.2 208.7 H1579 M1577 206.5 L1579.6 208.7 L1577 210.9" fill="none" stroke="#a2a5a8" stroke-width="1.5"/>
<path d="M1603.3 197.6 L1593.8 202.9 L1603.3 208.2" fill="none" stroke="#a2a5a8" stroke-width="1.6"/>
<circle cx="1603.3" cy="197.6" r="2.3" fill="#a2a5a8"/><circle cx="1593.8" cy="202.9" r="2.3" fill="#a2a5a8"/><circle cx="1603.3" cy="208.2" r="2.3" fill="#a2a5a8"/>
<circle cx="1622" cy="196" r="2" fill="#222"/>
<circle cx="1622" cy="202" r="2" fill="#222"/>
<circle cx="1622" cy="208" r="2" fill="#222"/>
<path d="M1227.5 231.5 L1230.5 228.5 L1233.5 231.5 M1227.5 236.3 L1230.5 239.3 L1233.5 236.3" fill="none" stroke="#4b97b5" stroke-width="1.3"/>
<path d="M1610.5 233.5 L1614.5 237.5 L1621.5 230 M1614.5 233.5 L1618 237 L1625.8 230" fill="none" stroke="#4b97b5" stroke-width="1.3"/>
<path d="M1230 253.5 L1233 256 L1230 258.5 Z" fill="#777"/>
<rect x="1616.5" y="250.5" width="11" height="11" rx="1" fill="none" stroke="#c8c8c8" stroke-width="1.2"/>
<path d="M1230 277.5 L1233 280 L1230 282.5 Z" fill="#777"/>
<rect x="1616.5" y="274.5" width="11" height="11" rx="1" fill="none" stroke="#c8c8c8" stroke-width="1.2"/>
<path d="M1230 301.5 L1233 304 L1230 306.5 Z" fill="#777"/>
<rect x="1616.5" y="298.5" width="11" height="11" rx="1" fill="none" stroke="#c8c8c8" stroke-width="1.2"/>
<path d="M1230 325.5 L1233 328 L1230 330.5 Z" fill="#777"/>
<rect x="1616.5" y="322.5" width="11" height="11" rx="1" fill="none" stroke="#c8c8c8" stroke-width="1.2"/>
<path d="M1230 349.5 L1233 352 L1230 354.5 Z" fill="#777"/>
<rect x="1616.5" y="346.5" width="11" height="11" rx="1" fill="none" stroke="#c8c8c8" stroke-width="1.2"/>
</svg>
<div class="t" style="left:403.40px;top:8.00px;font-size:13.23px;line-height:14.780px;font-weight:400;color:#f4f4f4;transform:scaleX(1.0164);letter-spacing:0.000px">Базовое пространство</div>
<div class="t" style="left:901.67px;top:4.00px;font-size:18.75px;line-height:20.947px;font-weight:400;color:#e6e6e6;transform:scaleX(0.9920);letter-spacing:0.000px">Школа</div>
<div class="t" style="left:1258.92px;top:55.00px;font-size:13.08px;line-height:14.613px;font-weight:400;color:#dcdcdc;transform:scaleX(0.8682);letter-spacing:0.000px">ДЕРЕВО ЭЛЕМЕНТОВ</div>
<div class="t" style="left:1232.88px;top:90.00px;font-size:14.24px;line-height:15.909px;font-weight:700;color:#dedede;transform:scaleX(0.9469);letter-spacing:0.000px">Дерево элементов</div>
<div class="t" style="left:1252.98px;top:125.00px;font-size:13.08px;line-height:14.613px;font-weight:400;color:#dedede;transform:scaleX(0.9240);letter-spacing:0.000px">IFC</div>
<div class="t" style="left:1329.18px;top:125.00px;font-size:13.08px;line-height:14.613px;font-weight:400;color:#dedede;transform:scaleX(0.9325);letter-spacing:0.000px">Слои</div>
<div class="t" style="left:1402.25px;top:125.00px;font-size:13.08px;line-height:14.613px;font-weight:400;color:#dedede;transform:scaleX(0.9806);letter-spacing:0.000px">Классы</div>
<div class="t" style="left:1487.06px;top:125.00px;font-size:13.08px;line-height:14.613px;font-weight:400;color:#dedede;transform:scaleX(0.9540);letter-spacing:0.000px">Этажи</div>
<div class="t" style="left:1552.96px;top:125.00px;font-size:13.08px;line-height:14.613px;font-weight:400;color:#dedede;transform:scaleX(0.9657);letter-spacing:0.000px">Группировки</div>
<div class="t" style="left:1247.43px;top:159.00px;font-size:10.17px;line-height:11.362px;font-weight:400;color:#4b97b5;transform:scaleX(1.0000);letter-spacing:1.019px">Добавить группировку</div>
<div class="t" style="left:1527.64px;top:161.00px;font-size:13.08px;line-height:14.613px;font-weight:400;color:#4b97b5;transform:scaleX(1.0000);letter-spacing:0.711px">Скрыть модель</div>
<div class="t" style="left:1246.34px;top:196.00px;font-size:13.25px;line-height:14.803px;font-weight:700;color:#333333;transform:scaleX(0.8829);letter-spacing:0.000px">окна</div>
<div class="t" style="left:1247.07px;top:229.00px;font-size:10.17px;line-height:11.362px;font-weight:400;color:#4b97b5;transform:scaleX(1.0000);letter-spacing:0.931px">Развернуть дерево</div>
<div class="t" style="left:1524.97px;top:229.00px;font-size:10.17px;line-height:11.362px;font-weight:400;color:#4b97b5;transform:scaleX(1.0000);letter-spacing:0.991px">Выделить всё</div>
<div class="t" style="left:1244.46px;top:249.00px;font-size:13.08px;line-height:14.613px;font-weight:700;color:#333333;transform:scaleX(0.8485);letter-spacing:0.000px">BuildingStorey:</div>
<div class="t" style="left:1329.56px;top:249.00px;font-size:13.08px;line-height:14.613px;font-weight:400;color:#333333;transform:scaleX(0.9450);letter-spacing:0.000px">1-й этаж</div>
<div class="t" style="left:1244.46px;top:273.00px;font-size:13.08px;line-height:14.613px;font-weight:700;color:#333333;transform:scaleX(0.8485);letter-spacing:0.000px">BuildingStorey:</div>
<div class="t" style="left:1330.03px;top:273.00px;font-size:13.08px;line-height:14.613px;font-weight:400;color:#333333;transform:scaleX(0.9450);letter-spacing:0.000px">3-й этаж</div>
<div class="t" style="left:1244.46px;top:297.00px;font-size:13.08px;line-height:14.613px;font-weight:700;color:#333333;transform:scaleX(0.8485);letter-spacing:0.000px">BuildingStorey:</div>
<div class="t" style="left:1329.87px;top:297.00px;font-size:13.08px;line-height:14.613px;font-weight:400;color:#333333;transform:scaleX(0.9450);letter-spacing:0.000px">Спортзал</div>
<div class="t" style="left:1244.46px;top:321.00px;font-size:13.08px;line-height:14.613px;font-weight:700;color:#333333;transform:scaleX(0.8485);letter-spacing:0.000px">BuildingStorey:</div>
<div class="t" style="left:1329.87px;top:321.00px;font-size:13.08px;line-height:14.613px;font-weight:400;color:#333333;transform:scaleX(0.9450);letter-spacing:0.000px">Этаж 2</div>
<div class="t" style="left:1244.46px;top:345.00px;font-size:13.08px;line-height:14.613px;font-weight:700;color:#333333;transform:scaleX(0.8485);letter-spacing:0.000px">BuildingStorey:</div>
<div class="t" style="left:1329.87px;top:345.00px;font-size:13.08px;line-height:14.613px;font-weight:400;color:#333333;transform:scaleX(0.9450);letter-spacing:0.000px">Этаж 4</div>
<div class="t" style="left:104.58px;top:471.00px;font-size:14.39px;line-height:16.076px;font-weight:400;color:#dedede;transform:scaleX(0.9900);letter-spacing:0.000px">Сводная таблица элементов</div>
<div class="t" style="left:210.37px;top:502.00px;font-size:17.44px;line-height:19.484px;font-weight:700;color:#e4e4e4;transform:scaleX(0.8846);letter-spacing:0.000px">Структура</div>
<div class="t" style="left:443.53px;top:502.00px;font-size:17.44px;line-height:19.484px;font-weight:700;color:#e4e4e4;transform:scaleX(0.9183);letter-spacing:0.000px">Маркер</div>
<div class="t" style="left:613.87px;top:502.00px;font-size:17.44px;line-height:19.484px;font-weight:700;color:#e4e4e4;transform:scaleX(0.8828);letter-spacing:0.000px">Количество</div>
<div class="t" style="left:797.07px;top:502.00px;font-size:17.44px;line-height:19.484px;font-weight:700;color:#e4e4e4;transform:scaleX(0.8869);letter-spacing:0.000px">Модель</div>
<div class="t" style="left:945.57px;top:502.00px;font-size:17.44px;line-height:19.484px;font-weight:700;color:#e4e4e4;transform:scaleX(0.9274);letter-spacing:0.000px">Этаж</div>
<div class="t" style="left:1087.75px;top:502.00px;font-size:17.44px;line-height:19.484px;font-weight:700;color:#e4e4e4;transform:scaleX(0.8970);letter-spacing:0.000px">IFC-тип</div>
<div class="t" style="left:157.92px;top:529.00px;font-size:14.24px;line-height:15.909px;font-weight:700;color:#111111;transform:scaleX(1.0127);letter-spacing:0.000px">Этаж:</div>
<div class="t" style="left:201.12px;top:529.00px;font-size:14.24px;line-height:15.909px;font-weight:400;color:#111111;transform:scaleX(1.0000);letter-spacing:0.000px">1-й этаж</div>
<div class="t" style="left:652.83px;top:529.00px;font-size:14.24px;line-height:15.909px;font-weight:400;color:#111111;transform:scaleX(1.0000);letter-spacing:0.000px">76</div>
<div class="t" style="left:826.12px;top:529.00px;font-size:14.24px;line-height:15.909px;font-weight:400;color:#111111;transform:scaleX(1.0000);letter-spacing:0.000px">-</div>
<div class="t" style="left:965.12px;top:529.00px;font-size:14.24px;line-height:15.909px;font-weight:400;color:#111111;transform:scaleX(1.0000);letter-spacing:0.000px">-</div>
<div class="t" style="left:1115.12px;top:529.00px;font-size:14.24px;line-height:15.909px;font-weight:400;color:#111111;transform:scaleX(1.0000);letter-spacing:0.000px">-</div>
<div class="t" style="left:157.92px;top:554.00px;font-size:14.24px;line-height:15.909px;font-weight:700;color:#111111;transform:scaleX(1.0127);letter-spacing:0.000px">Этаж:</div>
<div class="t" style="left:201.66px;top:554.00px;font-size:14.24px;line-height:15.909px;font-weight:400;color:#111111;transform:scaleX(1.0000);letter-spacing:0.000px">3-й этаж</div>
<div class="t" style="left:652.82px;top:554.00px;font-size:14.24px;line-height:15.909px;font-weight:400;color:#111111;transform:scaleX(1.0000);letter-spacing:0.000px">90</div>
<div class="t" style="left:826.12px;top:554.00px;font-size:14.24px;line-height:15.909px;font-weight:400;color:#111111;transform:scaleX(1.0000);letter-spacing:0.000px">-</div>
<div class="t" style="left:965.12px;top:554.00px;font-size:14.24px;line-height:15.909px;font-weight:400;color:#111111;transform:scaleX(1.0000);letter-spacing:0.000px">-</div>
<div class="t" style="left:1115.12px;top:554.00px;font-size:14.24px;line-height:15.909px;font-weight:400;color:#111111;transform:scaleX(1.0000);letter-spacing:0.000px">-</div>
<div class="t" style="left:157.92px;top:579.00px;font-size:14.24px;line-height:15.909px;font-weight:700;color:#111111;transform:scaleX(1.0127);letter-spacing:0.000px">Этаж:</div>
<div class="t" style="left:201.48px;top:579.00px;font-size:14.24px;line-height:15.909px;font-weight:400;color:#111111;transform:scaleX(1.0000);letter-spacing:0.000px">Спортзал</div>
<div class="t" style="left:656.88px;top:579.00px;font-size:14.24px;line-height:15.909px;font-weight:400;color:#111111;transform:scaleX(1.0000);letter-spacing:0.000px">4</div>
<div class="t" style="left:826.12px;top:579.00px;font-size:14.24px;line-height:15.909px;font-weight:400;color:#111111;transform:scaleX(1.0000);letter-spacing:0.000px">-</div>
<div class="t" style="left:965.12px;top:579.00px;font-size:14.24px;line-height:15.909px;font-weight:400;color:#111111;transform:scaleX(1.0000);letter-spacing:0.000px">-</div>
<div class="t" style="left:1115.12px;top:579.00px;font-size:14.24px;line-height:15.909px;font-weight:400;color:#111111;transform:scaleX(1.0000);letter-spacing:0.000px">-</div>
<div class="t" style="left:157.92px;top:604.00px;font-size:14.24px;line-height:15.909px;font-weight:700;color:#111111;transform:scaleX(1.0127);letter-spacing:0.000px">Этаж:</div>
<div class="t" style="left:201.47px;top:604.00px;font-size:14.24px;line-height:15.909px;font-weight:400;color:#111111;transform:scaleX(1.0000);letter-spacing:0.000px">Этаж 2</div>
<div class="t" style="left:652.91px;top:604.00px;font-size:14.24px;line-height:15.909px;font-weight:400;color:#111111;transform:scaleX(1.0000);letter-spacing:0.000px">89</div>
<div class="t" style="left:826.12px;top:604.00px;font-size:14.24px;line-height:15.909px;font-weight:400;color:#111111;transform:scaleX(1.0000);letter-spacing:0.000px">-</div>
<div class="t" style="left:965.12px;top:604.00px;font-size:14.24px;line-height:15.909px;font-weight:400;color:#111111;transform:scaleX(1.0000);letter-spacing:0.000px">-</div>
<div class="t" style="left:1115.12px;top:604.00px;font-size:14.24px;line-height:15.909px;font-weight:400;color:#111111;transform:scaleX(1.0000);letter-spacing:0.000px">-</div>
<div class="t" style="left:157.92px;top:629.00px;font-size:14.24px;line-height:15.909px;font-weight:700;color:#111111;transform:scaleX(1.0127);letter-spacing:0.000px">Этаж:</div>
<div class="t" style="left:201.47px;top:629.00px;font-size:14.24px;line-height:15.909px;font-weight:400;color:#111111;transform:scaleX(1.0000);letter-spacing:0.000px">Этаж 4</div>
<div class="t" style="left:656.79px;top:629.00px;font-size:14.24px;line-height:15.909px;font-weight:400;color:#111111;transform:scaleX(1.0000);letter-spacing:0.000px">6</div>
<div class="t" style="left:826.12px;top:629.00px;font-size:14.24px;line-height:15.909px;font-weight:400;color:#111111;transform:scaleX(1.0000);letter-spacing:0.000px">-</div>
<div class="t" style="left:965.12px;top:629.00px;font-size:14.24px;line-height:15.909px;font-weight:400;color:#111111;transform:scaleX(1.0000);letter-spacing:0.000px">-</div>
<div class="t" style="left:1115.12px;top:629.00px;font-size:14.24px;line-height:15.909px;font-weight:400;color:#111111;transform:scaleX(1.0000);letter-spacing:0.000px">-</div>
<svg width="1684" height="852" viewBox="0 0 1684 852">
<defs><filter id="ash2" x="-50%" y="-20%" width="200%" height="140%"><feGaussianBlur in="SourceAlpha" stdDeviation="2.5"/><feOffset dx="4" dy="2"/><feComponentTransfer><feFuncA type="linear" slope="0.5"/></feComponentTransfer><feMerge><feMergeNode/><feMergeNode in="SourceGraphic"/></feMerge></filter></defs>
<g filter="url(#ash2)"><path d="M1526.5 294 L1556.5 225" stroke="#c40000" stroke-width="3.8" stroke-linecap="butt"/><path d="M1562.4 212 L1550.2 222.6 L1563.6 228 Z" fill="#c40000"/></g>
</svg>
</body></html>
